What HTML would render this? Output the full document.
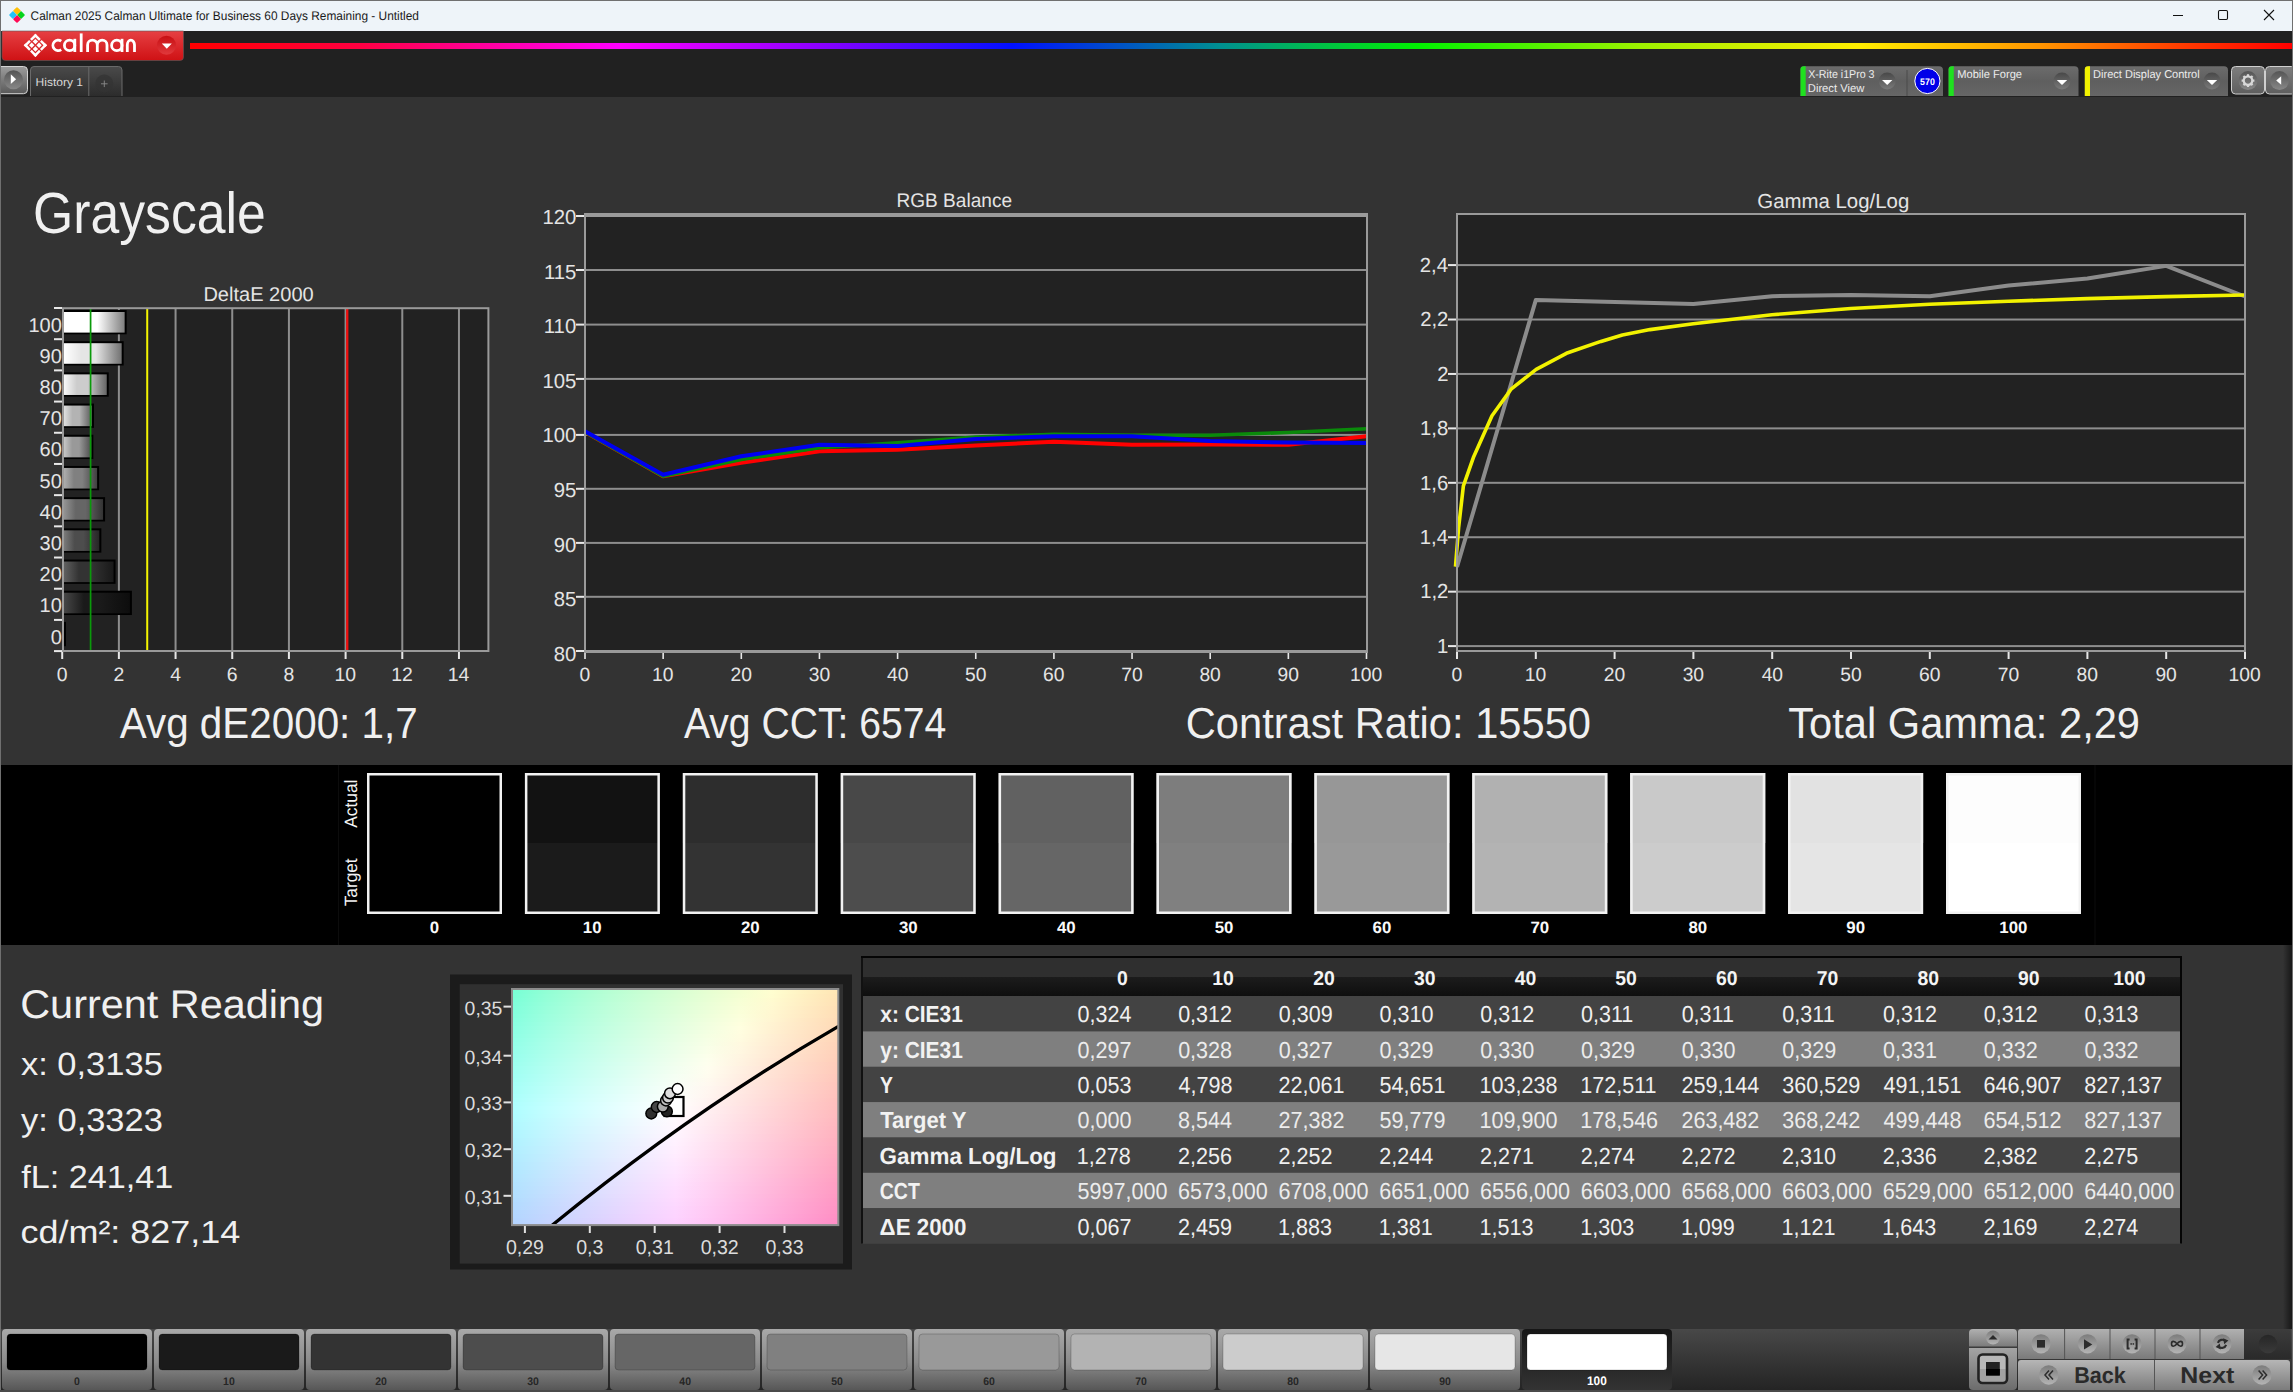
<!DOCTYPE html><html><head><meta charset="utf-8"><title>Calman Grayscale</title><style>html,body{margin:0;padding:0;width:2293px;height:1392px;overflow:hidden;background:#333;}svg{display:block;font-family:"Liberation Sans",sans-serif;}</style></head><body><svg width="2293" height="1392" viewBox="0 0 2293 1392" font-family="Liberation Sans, sans-serif" text-rendering="geometricPrecision"><defs>
<linearGradient id="gRed" x1="0" y1="0" x2="0" y2="1"><stop offset="0" stop-color="#e64043"/><stop offset="1" stop-color="#cf1114"/></linearGradient>
<linearGradient id="gRedDrop" x1="0" y1="0" x2="0" y2="1"><stop offset="0" stop-color="#c80e12"/><stop offset="1" stop-color="#e0393c"/></linearGradient>
<linearGradient id="gRainbow" x1="0" y1="0" x2="1" y2="0">
<stop offset="0" stop-color="#ff0000"/><stop offset="0.08" stop-color="#ff0040"/><stop offset="0.204" stop-color="#ff00ff"/>
<stop offset="0.30" stop-color="#8a00ff"/><stop offset="0.391" stop-color="#0010ff"/><stop offset="0.49" stop-color="#009090"/>
<stop offset="0.584" stop-color="#00f000"/><stop offset="0.69" stop-color="#9ef000"/><stop offset="0.793" stop-color="#ffee00"/>
<stop offset="0.88" stop-color="#ff9500"/><stop offset="0.95" stop-color="#ff3800"/><stop offset="1" stop-color="#ff0000"/></linearGradient>
<linearGradient id="gBtn" x1="0" y1="0" x2="0" y2="1"><stop offset="0" stop-color="#9c9c9c"/><stop offset="1" stop-color="#5a5a5a"/></linearGradient>
<linearGradient id="gBtn2" x1="0" y1="0" x2="0" y2="1"><stop offset="0" stop-color="#7e7e7e"/><stop offset="1" stop-color="#5e5e5e"/></linearGradient>
<linearGradient id="gCirc" x1="0" y1="0" x2="0" y2="1"><stop offset="0" stop-color="#555"/><stop offset="1" stop-color="#888"/></linearGradient>
<linearGradient id="gTab" x1="0" y1="0" x2="0" y2="1"><stop offset="0" stop-color="#4a4a4a"/><stop offset="1" stop-color="#2c2c2c"/></linearGradient>
<linearGradient id="gPanel" x1="0" y1="0" x2="0" y2="1"><stop offset="0" stop-color="#6c6c6c"/><stop offset="0.5" stop-color="#5f5f5f"/><stop offset="1" stop-color="#666"/></linearGradient>
<linearGradient id="gDrop" x1="0" y1="0" x2="0" y2="1"><stop offset="0" stop-color="#484848"/><stop offset="1" stop-color="#7a7a7a"/></linearGradient>
<linearGradient id="bar100" x1="0" y1="0" x2="1" y2="0"><stop offset="0" stop-color="rgb(255,255,255)"/><stop offset="0.3" stop-color="rgb(255,255,255)"/><stop offset="0.55" stop-color="rgb(255,255,255)"/><stop offset="1" stop-color="rgb(127,127,127)"/></linearGradient>
<linearGradient id="bar90" x1="0" y1="0" x2="1" y2="0"><stop offset="0" stop-color="rgb(255,255,255)"/><stop offset="0.3" stop-color="rgb(229,229,229)"/><stop offset="0.55" stop-color="rgb(229,229,229)"/><stop offset="1" stop-color="rgb(114,114,114)"/></linearGradient>
<linearGradient id="bar80" x1="0" y1="0" x2="1" y2="0"><stop offset="0" stop-color="rgb(249,249,249)"/><stop offset="0.3" stop-color="rgb(204,204,204)"/><stop offset="0.55" stop-color="rgb(204,204,204)"/><stop offset="1" stop-color="rgb(102,102,102)"/></linearGradient>
<linearGradient id="bar70" x1="0" y1="0" x2="1" y2="0"><stop offset="0" stop-color="rgb(224,224,224)"/><stop offset="0.3" stop-color="rgb(179,179,179)"/><stop offset="0.55" stop-color="rgb(179,179,179)"/><stop offset="1" stop-color="rgb(89,89,89)"/></linearGradient>
<linearGradient id="bar60" x1="0" y1="0" x2="1" y2="0"><stop offset="0" stop-color="rgb(198,198,198)"/><stop offset="0.3" stop-color="rgb(153,153,153)"/><stop offset="0.55" stop-color="rgb(153,153,153)"/><stop offset="1" stop-color="rgb(76,76,76)"/></linearGradient>
<linearGradient id="bar50" x1="0" y1="0" x2="1" y2="0"><stop offset="0" stop-color="rgb(173,173,173)"/><stop offset="0.3" stop-color="rgb(128,128,128)"/><stop offset="0.55" stop-color="rgb(128,128,128)"/><stop offset="1" stop-color="rgb(64,64,64)"/></linearGradient>
<linearGradient id="bar40" x1="0" y1="0" x2="1" y2="0"><stop offset="0" stop-color="rgb(147,147,147)"/><stop offset="0.3" stop-color="rgb(102,102,102)"/><stop offset="0.55" stop-color="rgb(102,102,102)"/><stop offset="1" stop-color="rgb(51,51,51)"/></linearGradient>
<linearGradient id="bar30" x1="0" y1="0" x2="1" y2="0"><stop offset="0" stop-color="rgb(122,122,122)"/><stop offset="0.3" stop-color="rgb(77,77,77)"/><stop offset="0.55" stop-color="rgb(77,77,77)"/><stop offset="1" stop-color="rgb(38,38,38)"/></linearGradient>
<linearGradient id="bar20" x1="0" y1="0" x2="1" y2="0"><stop offset="0" stop-color="rgb(96,96,96)"/><stop offset="0.3" stop-color="rgb(51,51,51)"/><stop offset="0.55" stop-color="rgb(51,51,51)"/><stop offset="1" stop-color="rgb(25,25,25)"/></linearGradient>
<linearGradient id="bar10" x1="0" y1="0" x2="1" y2="0"><stop offset="0" stop-color="rgb(71,71,71)"/><stop offset="0.3" stop-color="rgb(26,26,26)"/><stop offset="0.55" stop-color="rgb(26,26,26)"/><stop offset="1" stop-color="rgb(13,13,13)"/></linearGradient>
<linearGradient id="bar0" x1="0" y1="0" x2="1" y2="0"><stop offset="0" stop-color="rgb(45,45,45)"/><stop offset="0.3" stop-color="rgb(0,0,0)"/><stop offset="0.55" stop-color="rgb(0,0,0)"/><stop offset="1" stop-color="rgb(0,0,0)"/></linearGradient>
<linearGradient id="gHdr" x1="0" y1="0" x2="0" y2="1"><stop offset="0" stop-color="#1c1c1c"/><stop offset="1" stop-color="#0e0e0e"/></linearGradient>
<linearGradient id="gBar" x1="0" y1="0" x2="0" y2="1"><stop offset="0" stop-color="#484848"/><stop offset="1" stop-color="#242424"/></linearGradient>
<linearGradient id="gBBtn" x1="0" y1="0" x2="0" y2="1"><stop offset="0" stop-color="#a9a9a9"/><stop offset="0.55" stop-color="#8a8a8a"/><stop offset="1" stop-color="#575757"/></linearGradient>
<linearGradient id="gBSel" x1="0" y1="0" x2="0" y2="1"><stop offset="0" stop-color="#161616"/><stop offset="1" stop-color="#333"/></linearGradient>
<linearGradient id="gCtl" x1="0" y1="0" x2="0" y2="1"><stop offset="0" stop-color="#b0b0b0"/><stop offset="1" stop-color="#7a7a7a"/></linearGradient>
<linearGradient id="gCtl2" x1="0" y1="0" x2="0" y2="1"><stop offset="0" stop-color="#a4a4a4"/><stop offset="1" stop-color="#6c6c6c"/></linearGradient>
<linearGradient id="gCtl3" x1="0" y1="0" x2="0" y2="1"><stop offset="0" stop-color="#b6b6b6"/><stop offset="1" stop-color="#7c7c7c"/></linearGradient>
<linearGradient id="gCtlC" x1="0" y1="0" x2="0" y2="1"><stop offset="0" stop-color="#7c7c7c"/><stop offset="1" stop-color="#b4b4b4"/></linearGradient>
<linearGradient id="gDarkC" x1="0" y1="0" x2="0" y2="1"><stop offset="0" stop-color="#262626"/><stop offset="1" stop-color="#3a3a3a"/></linearGradient>
<linearGradient id="gShadeR" x1="0" y1="0" x2="1" y2="0"><stop offset="0" stop-color="#000" stop-opacity="0"/><stop offset="1" stop-color="#000" stop-opacity="0.55"/></linearGradient>
<linearGradient id="gDark" x1="0" y1="0" x2="0" y2="1"><stop offset="0" stop-color="#3c3c3c"/><stop offset="1" stop-color="#2a2a2a"/></linearGradient>
<linearGradient id="cie0"><stop offset="0.006" stop-color="#7affd6"/><stop offset="0.105" stop-color="#92ffd5"/><stop offset="0.204" stop-color="#a6ffd5"/><stop offset="0.302" stop-color="#b8ffd4"/><stop offset="0.401" stop-color="#c8ffd3"/><stop offset="0.500" stop-color="#d7ffd3"/><stop offset="0.599" stop-color="#e6ffd2"/><stop offset="0.698" stop-color="#f3ffd1"/><stop offset="0.796" stop-color="#fffed0"/><stop offset="0.895" stop-color="#fff2c2"/><stop offset="0.994" stop-color="#ffe6b5"/><stop offset="1" stop-color="#ffe6b5"/></linearGradient>
<linearGradient id="cie1"><stop offset="0.006" stop-color="#7cffd7"/><stop offset="0.105" stop-color="#94ffd7"/><stop offset="0.204" stop-color="#a8ffd6"/><stop offset="0.302" stop-color="#baffd6"/><stop offset="0.401" stop-color="#caffd5"/><stop offset="0.500" stop-color="#d9ffd4"/><stop offset="0.599" stop-color="#e7ffd4"/><stop offset="0.698" stop-color="#f4ffd3"/><stop offset="0.796" stop-color="#fffdd0"/><stop offset="0.895" stop-color="#fff0c2"/><stop offset="0.994" stop-color="#ffe4b5"/><stop offset="1" stop-color="#ffe4b5"/></linearGradient>
<linearGradient id="cie2"><stop offset="0.006" stop-color="#7effd9"/><stop offset="0.105" stop-color="#95ffd8"/><stop offset="0.204" stop-color="#a9ffd8"/><stop offset="0.302" stop-color="#bbffd7"/><stop offset="0.401" stop-color="#cbffd6"/><stop offset="0.500" stop-color="#daffd6"/><stop offset="0.599" stop-color="#e8ffd5"/><stop offset="0.698" stop-color="#f6ffd5"/><stop offset="0.796" stop-color="#fffbd0"/><stop offset="0.895" stop-color="#ffefc3"/><stop offset="0.994" stop-color="#ffe3b5"/><stop offset="1" stop-color="#ffe3b5"/></linearGradient>
<linearGradient id="cie3"><stop offset="0.006" stop-color="#80ffda"/><stop offset="0.105" stop-color="#97ffda"/><stop offset="0.204" stop-color="#abffd9"/><stop offset="0.302" stop-color="#bdffd9"/><stop offset="0.401" stop-color="#cdffd8"/><stop offset="0.500" stop-color="#dcffd7"/><stop offset="0.599" stop-color="#eaffd7"/><stop offset="0.698" stop-color="#f7ffd6"/><stop offset="0.796" stop-color="#fffad1"/><stop offset="0.895" stop-color="#ffeec3"/><stop offset="0.994" stop-color="#ffe2b6"/><stop offset="1" stop-color="#ffe2b6"/></linearGradient>
<linearGradient id="cie4"><stop offset="0.006" stop-color="#82ffdc"/><stop offset="0.105" stop-color="#99ffdb"/><stop offset="0.204" stop-color="#adffdb"/><stop offset="0.302" stop-color="#beffda"/><stop offset="0.401" stop-color="#ceffd9"/><stop offset="0.500" stop-color="#ddffd9"/><stop offset="0.599" stop-color="#ebffd8"/><stop offset="0.698" stop-color="#f8ffd8"/><stop offset="0.796" stop-color="#fff9d1"/><stop offset="0.895" stop-color="#ffecc3"/><stop offset="0.994" stop-color="#ffe0b6"/><stop offset="1" stop-color="#ffe0b6"/></linearGradient>
<linearGradient id="cie5"><stop offset="0.006" stop-color="#84ffdd"/><stop offset="0.105" stop-color="#9bffdc"/><stop offset="0.204" stop-color="#aeffdc"/><stop offset="0.302" stop-color="#c0ffdb"/><stop offset="0.401" stop-color="#d0ffdb"/><stop offset="0.500" stop-color="#deffda"/><stop offset="0.599" stop-color="#ecffda"/><stop offset="0.698" stop-color="#faffd9"/><stop offset="0.796" stop-color="#fff7d1"/><stop offset="0.895" stop-color="#ffebc4"/><stop offset="0.994" stop-color="#ffdfb6"/><stop offset="1" stop-color="#ffdfb6"/></linearGradient>
<linearGradient id="cie6"><stop offset="0.006" stop-color="#86ffde"/><stop offset="0.105" stop-color="#9dffde"/><stop offset="0.204" stop-color="#b0ffdd"/><stop offset="0.302" stop-color="#c1ffdd"/><stop offset="0.401" stop-color="#d1ffdc"/><stop offset="0.500" stop-color="#e0ffdc"/><stop offset="0.599" stop-color="#eeffdb"/><stop offset="0.698" stop-color="#fbffdb"/><stop offset="0.796" stop-color="#fff6d1"/><stop offset="0.895" stop-color="#ffeac4"/><stop offset="0.994" stop-color="#ffdeb7"/><stop offset="1" stop-color="#ffdeb7"/></linearGradient>
<linearGradient id="cie7"><stop offset="0.006" stop-color="#88ffe0"/><stop offset="0.105" stop-color="#9effdf"/><stop offset="0.204" stop-color="#b1ffdf"/><stop offset="0.302" stop-color="#c3ffde"/><stop offset="0.401" stop-color="#d2ffde"/><stop offset="0.500" stop-color="#e1ffde"/><stop offset="0.599" stop-color="#efffdd"/><stop offset="0.698" stop-color="#fcffdd"/><stop offset="0.796" stop-color="#fff5d2"/><stop offset="0.895" stop-color="#ffe8c4"/><stop offset="0.994" stop-color="#ffdcb7"/><stop offset="1" stop-color="#ffdcb7"/></linearGradient>
<linearGradient id="cie8"><stop offset="0.006" stop-color="#8affe1"/><stop offset="0.105" stop-color="#a0ffe1"/><stop offset="0.204" stop-color="#b3ffe0"/><stop offset="0.302" stop-color="#c4ffe0"/><stop offset="0.401" stop-color="#d4ffe0"/><stop offset="0.500" stop-color="#e3ffdf"/><stop offset="0.599" stop-color="#f1ffdf"/><stop offset="0.698" stop-color="#feffde"/><stop offset="0.796" stop-color="#fff3d2"/><stop offset="0.895" stop-color="#ffe7c5"/><stop offset="0.994" stop-color="#ffdbb7"/><stop offset="1" stop-color="#ffdbb7"/></linearGradient>
<linearGradient id="cie9"><stop offset="0.006" stop-color="#8cffe3"/><stop offset="0.105" stop-color="#a2ffe2"/><stop offset="0.204" stop-color="#b5ffe2"/><stop offset="0.302" stop-color="#c6ffe1"/><stop offset="0.401" stop-color="#d5ffe1"/><stop offset="0.500" stop-color="#e4ffe1"/><stop offset="0.599" stop-color="#f2ffe0"/><stop offset="0.698" stop-color="#ffffe0"/><stop offset="0.796" stop-color="#fff2d2"/><stop offset="0.895" stop-color="#ffe6c5"/><stop offset="0.994" stop-color="#ffdab8"/><stop offset="1" stop-color="#ffdab8"/></linearGradient>
<linearGradient id="cie10"><stop offset="0.006" stop-color="#8effe4"/><stop offset="0.105" stop-color="#a3ffe4"/><stop offset="0.204" stop-color="#b6ffe3"/><stop offset="0.302" stop-color="#c7ffe3"/><stop offset="0.401" stop-color="#d7ffe3"/><stop offset="0.500" stop-color="#e5ffe2"/><stop offset="0.599" stop-color="#f3ffe2"/><stop offset="0.698" stop-color="#fffde0"/><stop offset="0.796" stop-color="#fff1d2"/><stop offset="0.895" stop-color="#ffe4c5"/><stop offset="0.994" stop-color="#ffd8b8"/><stop offset="1" stop-color="#ffd8b8"/></linearGradient>
<linearGradient id="cie11"><stop offset="0.006" stop-color="#90ffe5"/><stop offset="0.105" stop-color="#a5ffe5"/><stop offset="0.204" stop-color="#b8ffe5"/><stop offset="0.302" stop-color="#c9ffe4"/><stop offset="0.401" stop-color="#d8ffe4"/><stop offset="0.500" stop-color="#e7ffe4"/><stop offset="0.599" stop-color="#f5ffe3"/><stop offset="0.698" stop-color="#fffce0"/><stop offset="0.796" stop-color="#ffefd3"/><stop offset="0.895" stop-color="#ffe3c5"/><stop offset="0.994" stop-color="#ffd7b8"/><stop offset="1" stop-color="#ffd7b8"/></linearGradient>
<linearGradient id="cie12"><stop offset="0.006" stop-color="#92ffe7"/><stop offset="0.105" stop-color="#a7ffe7"/><stop offset="0.204" stop-color="#b9ffe6"/><stop offset="0.302" stop-color="#caffe6"/><stop offset="0.401" stop-color="#daffe6"/><stop offset="0.500" stop-color="#e8ffe5"/><stop offset="0.599" stop-color="#f6ffe5"/><stop offset="0.698" stop-color="#fffbe0"/><stop offset="0.796" stop-color="#ffeed3"/><stop offset="0.895" stop-color="#ffe2c6"/><stop offset="0.994" stop-color="#ffd6b9"/><stop offset="1" stop-color="#ffd6b9"/></linearGradient>
<linearGradient id="cie13"><stop offset="0.006" stop-color="#94ffe8"/><stop offset="0.105" stop-color="#a9ffe8"/><stop offset="0.204" stop-color="#bbffe8"/><stop offset="0.302" stop-color="#ccffe7"/><stop offset="0.401" stop-color="#dbffe7"/><stop offset="0.500" stop-color="#eaffe7"/><stop offset="0.599" stop-color="#f7ffe6"/><stop offset="0.698" stop-color="#fff9e0"/><stop offset="0.796" stop-color="#ffedd3"/><stop offset="0.895" stop-color="#ffe0c6"/><stop offset="0.994" stop-color="#ffd4b9"/><stop offset="1" stop-color="#ffd4b9"/></linearGradient>
<linearGradient id="cie14"><stop offset="0.006" stop-color="#96ffea"/><stop offset="0.105" stop-color="#aaffe9"/><stop offset="0.204" stop-color="#bcffe9"/><stop offset="0.302" stop-color="#cdffe9"/><stop offset="0.401" stop-color="#dcffe9"/><stop offset="0.500" stop-color="#ebffe8"/><stop offset="0.599" stop-color="#f9ffe8"/><stop offset="0.698" stop-color="#fff8e1"/><stop offset="0.796" stop-color="#ffebd3"/><stop offset="0.895" stop-color="#ffdfc6"/><stop offset="0.994" stop-color="#ffd3b9"/><stop offset="1" stop-color="#ffd3b9"/></linearGradient>
<linearGradient id="cie15"><stop offset="0.006" stop-color="#98ffeb"/><stop offset="0.105" stop-color="#acffeb"/><stop offset="0.204" stop-color="#beffeb"/><stop offset="0.302" stop-color="#cfffea"/><stop offset="0.401" stop-color="#deffea"/><stop offset="0.500" stop-color="#ecffea"/><stop offset="0.599" stop-color="#faffe9"/><stop offset="0.698" stop-color="#fff7e1"/><stop offset="0.796" stop-color="#ffead4"/><stop offset="0.895" stop-color="#ffdec7"/><stop offset="0.994" stop-color="#ffd1ba"/><stop offset="1" stop-color="#ffd1ba"/></linearGradient>
<linearGradient id="cie16"><stop offset="0.006" stop-color="#99ffed"/><stop offset="0.105" stop-color="#aeffec"/><stop offset="0.204" stop-color="#c0ffec"/><stop offset="0.302" stop-color="#d0ffec"/><stop offset="0.401" stop-color="#dfffec"/><stop offset="0.500" stop-color="#eeffeb"/><stop offset="0.599" stop-color="#fcffeb"/><stop offset="0.698" stop-color="#fff5e1"/><stop offset="0.796" stop-color="#ffe9d4"/><stop offset="0.895" stop-color="#ffdcc7"/><stop offset="0.994" stop-color="#ffd0ba"/><stop offset="1" stop-color="#ffd0ba"/></linearGradient>
<linearGradient id="cie17"><stop offset="0.006" stop-color="#9bffee"/><stop offset="0.105" stop-color="#afffee"/><stop offset="0.204" stop-color="#c1ffee"/><stop offset="0.302" stop-color="#d2ffed"/><stop offset="0.401" stop-color="#e1ffed"/><stop offset="0.500" stop-color="#efffed"/><stop offset="0.599" stop-color="#fdffed"/><stop offset="0.698" stop-color="#fff4e1"/><stop offset="0.796" stop-color="#ffe7d4"/><stop offset="0.895" stop-color="#ffdbc7"/><stop offset="0.994" stop-color="#ffcfba"/><stop offset="1" stop-color="#ffcfba"/></linearGradient>
<linearGradient id="cie18"><stop offset="0.006" stop-color="#9dffef"/><stop offset="0.105" stop-color="#b1ffef"/><stop offset="0.204" stop-color="#c3ffef"/><stop offset="0.302" stop-color="#d3ffef"/><stop offset="0.401" stop-color="#e2ffef"/><stop offset="0.500" stop-color="#f1ffee"/><stop offset="0.599" stop-color="#feffee"/><stop offset="0.698" stop-color="#fff3e1"/><stop offset="0.796" stop-color="#ffe6d4"/><stop offset="0.895" stop-color="#ffd9c7"/><stop offset="0.994" stop-color="#ffcdbb"/><stop offset="1" stop-color="#ffcdbb"/></linearGradient>
<linearGradient id="cie19"><stop offset="0.006" stop-color="#9ffff1"/><stop offset="0.105" stop-color="#b3fff1"/><stop offset="0.204" stop-color="#c4fff0"/><stop offset="0.302" stop-color="#d5fff0"/><stop offset="0.401" stop-color="#e4fff0"/><stop offset="0.500" stop-color="#f2fff0"/><stop offset="0.599" stop-color="#fffeef"/><stop offset="0.698" stop-color="#fff1e2"/><stop offset="0.796" stop-color="#ffe4d5"/><stop offset="0.895" stop-color="#ffd8c8"/><stop offset="0.994" stop-color="#ffccbb"/><stop offset="1" stop-color="#ffccbb"/></linearGradient>
<linearGradient id="cie20"><stop offset="0.006" stop-color="#a1fff2"/><stop offset="0.105" stop-color="#b4fff2"/><stop offset="0.204" stop-color="#c6fff2"/><stop offset="0.302" stop-color="#d6fff2"/><stop offset="0.401" stop-color="#e5fff2"/><stop offset="0.500" stop-color="#f3fff1"/><stop offset="0.599" stop-color="#fffdef"/><stop offset="0.698" stop-color="#fff0e2"/><stop offset="0.796" stop-color="#ffe3d5"/><stop offset="0.895" stop-color="#ffd7c8"/><stop offset="0.994" stop-color="#ffcbbb"/><stop offset="1" stop-color="#ffcbbb"/></linearGradient>
<linearGradient id="cie21"><stop offset="0.006" stop-color="#a2fff4"/><stop offset="0.105" stop-color="#b6fff4"/><stop offset="0.204" stop-color="#c7fff3"/><stop offset="0.302" stop-color="#d7fff3"/><stop offset="0.401" stop-color="#e7fff3"/><stop offset="0.500" stop-color="#f5fff3"/><stop offset="0.599" stop-color="#fffcef"/><stop offset="0.698" stop-color="#ffeee2"/><stop offset="0.796" stop-color="#ffe2d5"/><stop offset="0.895" stop-color="#ffd5c8"/><stop offset="0.994" stop-color="#ffc9bc"/><stop offset="1" stop-color="#ffc9bc"/></linearGradient>
<linearGradient id="cie22"><stop offset="0.006" stop-color="#a4fff5"/><stop offset="0.105" stop-color="#b7fff5"/><stop offset="0.204" stop-color="#c9fff5"/><stop offset="0.302" stop-color="#d9fff5"/><stop offset="0.401" stop-color="#e8fff5"/><stop offset="0.500" stop-color="#f6fff4"/><stop offset="0.599" stop-color="#fffaef"/><stop offset="0.698" stop-color="#ffede2"/><stop offset="0.796" stop-color="#ffe0d5"/><stop offset="0.895" stop-color="#ffd4c8"/><stop offset="0.994" stop-color="#ffc8bc"/><stop offset="1" stop-color="#ffc8bc"/></linearGradient>
<linearGradient id="cie23"><stop offset="0.006" stop-color="#a6fff7"/><stop offset="0.105" stop-color="#b9fff6"/><stop offset="0.204" stop-color="#cafff6"/><stop offset="0.302" stop-color="#dafff6"/><stop offset="0.401" stop-color="#e9fff6"/><stop offset="0.500" stop-color="#f8fff6"/><stop offset="0.599" stop-color="#fff9f0"/><stop offset="0.698" stop-color="#ffece2"/><stop offset="0.796" stop-color="#ffdfd5"/><stop offset="0.895" stop-color="#ffd2c9"/><stop offset="0.994" stop-color="#ffc6bc"/><stop offset="1" stop-color="#ffc6bc"/></linearGradient>
<linearGradient id="cie24"><stop offset="0.006" stop-color="#a8fff8"/><stop offset="0.105" stop-color="#bbfff8"/><stop offset="0.204" stop-color="#ccfff8"/><stop offset="0.302" stop-color="#dcfff8"/><stop offset="0.401" stop-color="#ebfff8"/><stop offset="0.500" stop-color="#f9fff8"/><stop offset="0.599" stop-color="#fff7f0"/><stop offset="0.698" stop-color="#ffeae3"/><stop offset="0.796" stop-color="#ffded6"/><stop offset="0.895" stop-color="#ffd1c9"/><stop offset="0.994" stop-color="#ffc5bd"/><stop offset="1" stop-color="#ffc5bd"/></linearGradient>
<linearGradient id="cie25"><stop offset="0.006" stop-color="#a9fff9"/><stop offset="0.105" stop-color="#bcfff9"/><stop offset="0.204" stop-color="#cefff9"/><stop offset="0.302" stop-color="#ddfff9"/><stop offset="0.401" stop-color="#ecfff9"/><stop offset="0.500" stop-color="#fbfff9"/><stop offset="0.599" stop-color="#fff6f0"/><stop offset="0.698" stop-color="#ffe9e3"/><stop offset="0.796" stop-color="#ffdcd6"/><stop offset="0.895" stop-color="#ffd0c9"/><stop offset="0.994" stop-color="#ffc3bd"/><stop offset="1" stop-color="#ffc3bd"/></linearGradient>
<linearGradient id="cie26"><stop offset="0.006" stop-color="#abfffb"/><stop offset="0.105" stop-color="#befffb"/><stop offset="0.204" stop-color="#cffffb"/><stop offset="0.302" stop-color="#dffffb"/><stop offset="0.401" stop-color="#eefffb"/><stop offset="0.500" stop-color="#fcfffb"/><stop offset="0.599" stop-color="#fff5f0"/><stop offset="0.698" stop-color="#ffe7e3"/><stop offset="0.796" stop-color="#ffdbd6"/><stop offset="0.895" stop-color="#ffceca"/><stop offset="0.994" stop-color="#ffc2bd"/><stop offset="1" stop-color="#ffc2bd"/></linearGradient>
<linearGradient id="cie27"><stop offset="0.006" stop-color="#adfffc"/><stop offset="0.105" stop-color="#c0fffc"/><stop offset="0.204" stop-color="#d1fffc"/><stop offset="0.302" stop-color="#e0fffc"/><stop offset="0.401" stop-color="#effffc"/><stop offset="0.500" stop-color="#fdfffc"/><stop offset="0.599" stop-color="#fff3f0"/><stop offset="0.698" stop-color="#ffe6e3"/><stop offset="0.796" stop-color="#ffd9d6"/><stop offset="0.895" stop-color="#ffcdca"/><stop offset="0.994" stop-color="#ffc0bd"/><stop offset="1" stop-color="#ffc0bd"/></linearGradient>
<linearGradient id="cie28"><stop offset="0.006" stop-color="#affffe"/><stop offset="0.105" stop-color="#c1fffe"/><stop offset="0.204" stop-color="#d2fffe"/><stop offset="0.302" stop-color="#e2fffe"/><stop offset="0.401" stop-color="#f1fffe"/><stop offset="0.500" stop-color="#fffffe"/><stop offset="0.599" stop-color="#fff2f0"/><stop offset="0.698" stop-color="#ffe5e3"/><stop offset="0.796" stop-color="#ffd8d7"/><stop offset="0.895" stop-color="#ffcbca"/><stop offset="0.994" stop-color="#ffbfbe"/><stop offset="1" stop-color="#ffbfbe"/></linearGradient>
<linearGradient id="cie29"><stop offset="0.006" stop-color="#b0ffff"/><stop offset="0.105" stop-color="#c3ffff"/><stop offset="0.204" stop-color="#d3ffff"/><stop offset="0.302" stop-color="#e3ffff"/><stop offset="0.401" stop-color="#f2ffff"/><stop offset="0.500" stop-color="#fffefe"/><stop offset="0.599" stop-color="#fff0f1"/><stop offset="0.698" stop-color="#ffe3e4"/><stop offset="0.796" stop-color="#ffd6d7"/><stop offset="0.895" stop-color="#ffcaca"/><stop offset="0.994" stop-color="#ffbebe"/><stop offset="1" stop-color="#ffbebe"/></linearGradient>
<linearGradient id="cie30"><stop offset="0.006" stop-color="#b0fdff"/><stop offset="0.105" stop-color="#c3fdff"/><stop offset="0.204" stop-color="#d3fdff"/><stop offset="0.302" stop-color="#e3fdff"/><stop offset="0.401" stop-color="#f2fdff"/><stop offset="0.500" stop-color="#fffcfe"/><stop offset="0.599" stop-color="#ffeff1"/><stop offset="0.698" stop-color="#ffe2e4"/><stop offset="0.796" stop-color="#ffd5d7"/><stop offset="0.895" stop-color="#ffc8cb"/><stop offset="0.994" stop-color="#ffbcbe"/><stop offset="1" stop-color="#ffbcbe"/></linearGradient>
<linearGradient id="cie31"><stop offset="0.006" stop-color="#b0fcff"/><stop offset="0.105" stop-color="#c3fcff"/><stop offset="0.204" stop-color="#d3fcff"/><stop offset="0.302" stop-color="#e3fcff"/><stop offset="0.401" stop-color="#f2fcff"/><stop offset="0.500" stop-color="#fffbfe"/><stop offset="0.599" stop-color="#ffedf1"/><stop offset="0.698" stop-color="#ffe0e4"/><stop offset="0.796" stop-color="#ffd4d7"/><stop offset="0.895" stop-color="#ffc7cb"/><stop offset="0.994" stop-color="#ffbbbf"/><stop offset="1" stop-color="#ffbbbf"/></linearGradient>
<linearGradient id="cie32"><stop offset="0.006" stop-color="#b1fbff"/><stop offset="0.105" stop-color="#c3faff"/><stop offset="0.204" stop-color="#d4faff"/><stop offset="0.302" stop-color="#e3faff"/><stop offset="0.401" stop-color="#f2faff"/><stop offset="0.500" stop-color="#fff9fe"/><stop offset="0.599" stop-color="#ffecf1"/><stop offset="0.698" stop-color="#ffdfe4"/><stop offset="0.796" stop-color="#ffd2d7"/><stop offset="0.895" stop-color="#ffc6cb"/><stop offset="0.994" stop-color="#ffb9bf"/><stop offset="1" stop-color="#ffb9bf"/></linearGradient>
<linearGradient id="cie33"><stop offset="0.006" stop-color="#b1f9ff"/><stop offset="0.105" stop-color="#c3f9ff"/><stop offset="0.204" stop-color="#d4f9ff"/><stop offset="0.302" stop-color="#e3f9ff"/><stop offset="0.401" stop-color="#f2f9ff"/><stop offset="0.500" stop-color="#fff8fe"/><stop offset="0.599" stop-color="#ffebf1"/><stop offset="0.698" stop-color="#ffdde4"/><stop offset="0.796" stop-color="#ffd1d8"/><stop offset="0.895" stop-color="#ffc4cb"/><stop offset="0.994" stop-color="#ffb8bf"/><stop offset="1" stop-color="#ffb8bf"/></linearGradient>
<linearGradient id="cie34"><stop offset="0.006" stop-color="#b1f8ff"/><stop offset="0.105" stop-color="#c3f8ff"/><stop offset="0.204" stop-color="#d4f7ff"/><stop offset="0.302" stop-color="#e3f7ff"/><stop offset="0.401" stop-color="#f2f7ff"/><stop offset="0.500" stop-color="#fff7ff"/><stop offset="0.599" stop-color="#ffe9f1"/><stop offset="0.698" stop-color="#ffdce4"/><stop offset="0.796" stop-color="#ffcfd8"/><stop offset="0.895" stop-color="#ffc3cc"/><stop offset="0.994" stop-color="#ffb6bf"/><stop offset="1" stop-color="#ffb6bf"/></linearGradient>
<linearGradient id="cie35"><stop offset="0.006" stop-color="#b1f6ff"/><stop offset="0.105" stop-color="#c3f6ff"/><stop offset="0.204" stop-color="#d4f6ff"/><stop offset="0.302" stop-color="#e3f6ff"/><stop offset="0.401" stop-color="#f1f6ff"/><stop offset="0.500" stop-color="#fff5ff"/><stop offset="0.599" stop-color="#ffe8f1"/><stop offset="0.698" stop-color="#ffdbe5"/><stop offset="0.796" stop-color="#ffced8"/><stop offset="0.895" stop-color="#ffc1cc"/><stop offset="0.994" stop-color="#ffb4c0"/><stop offset="1" stop-color="#ffb4c0"/></linearGradient>
<linearGradient id="cie36"><stop offset="0.006" stop-color="#b1f5ff"/><stop offset="0.105" stop-color="#c3f5ff"/><stop offset="0.204" stop-color="#d4f4ff"/><stop offset="0.302" stop-color="#e3f4ff"/><stop offset="0.401" stop-color="#f1f4ff"/><stop offset="0.500" stop-color="#fff4ff"/><stop offset="0.599" stop-color="#ffe6f2"/><stop offset="0.698" stop-color="#ffd9e5"/><stop offset="0.796" stop-color="#ffccd8"/><stop offset="0.895" stop-color="#ffc0cc"/><stop offset="0.994" stop-color="#ffb3c0"/><stop offset="1" stop-color="#ffb3c0"/></linearGradient>
<linearGradient id="cie37"><stop offset="0.006" stop-color="#b1f3ff"/><stop offset="0.105" stop-color="#c3f3ff"/><stop offset="0.204" stop-color="#d4f3ff"/><stop offset="0.302" stop-color="#e3f3ff"/><stop offset="0.401" stop-color="#f1f2ff"/><stop offset="0.500" stop-color="#fff2ff"/><stop offset="0.599" stop-color="#ffe5f2"/><stop offset="0.698" stop-color="#ffd8e5"/><stop offset="0.796" stop-color="#ffcbd9"/><stop offset="0.895" stop-color="#ffbecc"/><stop offset="0.994" stop-color="#ffb1c0"/><stop offset="1" stop-color="#ffb1c0"/></linearGradient>
<linearGradient id="cie38"><stop offset="0.006" stop-color="#b1f2ff"/><stop offset="0.105" stop-color="#c3f2ff"/><stop offset="0.204" stop-color="#d4f1ff"/><stop offset="0.302" stop-color="#e3f1ff"/><stop offset="0.401" stop-color="#f1f1ff"/><stop offset="0.500" stop-color="#fff1ff"/><stop offset="0.599" stop-color="#ffe3f2"/><stop offset="0.698" stop-color="#ffd6e5"/><stop offset="0.796" stop-color="#ffc9d9"/><stop offset="0.895" stop-color="#ffbdcd"/><stop offset="0.994" stop-color="#ffb0c1"/><stop offset="1" stop-color="#ffb0c1"/></linearGradient>
<linearGradient id="cie39"><stop offset="0.006" stop-color="#b2f0ff"/><stop offset="0.105" stop-color="#c3f0ff"/><stop offset="0.204" stop-color="#d4f0ff"/><stop offset="0.302" stop-color="#e3f0ff"/><stop offset="0.401" stop-color="#f1efff"/><stop offset="0.500" stop-color="#ffefff"/><stop offset="0.599" stop-color="#ffe2f2"/><stop offset="0.698" stop-color="#ffd5e5"/><stop offset="0.796" stop-color="#ffc8d9"/><stop offset="0.895" stop-color="#ffbbcd"/><stop offset="0.994" stop-color="#ffaec1"/><stop offset="1" stop-color="#ffaec1"/></linearGradient>
<linearGradient id="cie40"><stop offset="0.006" stop-color="#b2efff"/><stop offset="0.105" stop-color="#c3efff"/><stop offset="0.204" stop-color="#d4eeff"/><stop offset="0.302" stop-color="#e3eeff"/><stop offset="0.401" stop-color="#f1eeff"/><stop offset="0.500" stop-color="#ffeeff"/><stop offset="0.599" stop-color="#ffe0f2"/><stop offset="0.698" stop-color="#ffd3e5"/><stop offset="0.796" stop-color="#ffc6d9"/><stop offset="0.895" stop-color="#ffb9cd"/><stop offset="0.994" stop-color="#ffadc1"/><stop offset="1" stop-color="#ffadc1"/></linearGradient>
<linearGradient id="cie41"><stop offset="0.006" stop-color="#b2edff"/><stop offset="0.105" stop-color="#c3edff"/><stop offset="0.204" stop-color="#d4edff"/><stop offset="0.302" stop-color="#e3edff"/><stop offset="0.401" stop-color="#f1ecff"/><stop offset="0.500" stop-color="#ffecff"/><stop offset="0.599" stop-color="#ffdff2"/><stop offset="0.698" stop-color="#ffd2e6"/><stop offset="0.796" stop-color="#ffc5d9"/><stop offset="0.895" stop-color="#ffb8cd"/><stop offset="0.994" stop-color="#ffabc1"/><stop offset="1" stop-color="#ffabc1"/></linearGradient>
<linearGradient id="cie42"><stop offset="0.006" stop-color="#b2ecff"/><stop offset="0.105" stop-color="#c4ecff"/><stop offset="0.204" stop-color="#d4ebff"/><stop offset="0.302" stop-color="#e3ebff"/><stop offset="0.401" stop-color="#f1ebff"/><stop offset="0.500" stop-color="#ffeaff"/><stop offset="0.599" stop-color="#ffddf2"/><stop offset="0.698" stop-color="#ffd0e6"/><stop offset="0.796" stop-color="#ffc3da"/><stop offset="0.895" stop-color="#ffb6ce"/><stop offset="0.994" stop-color="#ffa9c2"/><stop offset="1" stop-color="#ffa9c2"/></linearGradient>
<linearGradient id="cie43"><stop offset="0.006" stop-color="#b2eaff"/><stop offset="0.105" stop-color="#c4eaff"/><stop offset="0.204" stop-color="#d4eaff"/><stop offset="0.302" stop-color="#e3e9ff"/><stop offset="0.401" stop-color="#f1e9ff"/><stop offset="0.500" stop-color="#fee9ff"/><stop offset="0.599" stop-color="#ffdcf3"/><stop offset="0.698" stop-color="#ffcfe6"/><stop offset="0.796" stop-color="#ffc2da"/><stop offset="0.895" stop-color="#ffb5ce"/><stop offset="0.994" stop-color="#ffa8c2"/><stop offset="1" stop-color="#ffa8c2"/></linearGradient>
<linearGradient id="cie44"><stop offset="0.006" stop-color="#b2e9ff"/><stop offset="0.105" stop-color="#c4e9ff"/><stop offset="0.204" stop-color="#d4e8ff"/><stop offset="0.302" stop-color="#e3e8ff"/><stop offset="0.401" stop-color="#f1e8ff"/><stop offset="0.500" stop-color="#fee7ff"/><stop offset="0.599" stop-color="#ffdaf3"/><stop offset="0.698" stop-color="#ffcde6"/><stop offset="0.796" stop-color="#ffc0da"/><stop offset="0.895" stop-color="#ffb3ce"/><stop offset="0.994" stop-color="#ffa6c2"/><stop offset="1" stop-color="#ffa6c2"/></linearGradient>
<linearGradient id="cie45"><stop offset="0.006" stop-color="#b2e8ff"/><stop offset="0.105" stop-color="#c4e7ff"/><stop offset="0.204" stop-color="#d4e7ff"/><stop offset="0.302" stop-color="#e3e6ff"/><stop offset="0.401" stop-color="#f1e6ff"/><stop offset="0.500" stop-color="#fee6ff"/><stop offset="0.599" stop-color="#ffd9f3"/><stop offset="0.698" stop-color="#ffcce6"/><stop offset="0.796" stop-color="#ffbfda"/><stop offset="0.895" stop-color="#ffb2ce"/><stop offset="0.994" stop-color="#ffa5c2"/><stop offset="1" stop-color="#ffa5c2"/></linearGradient>
<linearGradient id="cie46"><stop offset="0.006" stop-color="#b3e6ff"/><stop offset="0.105" stop-color="#c4e6ff"/><stop offset="0.204" stop-color="#d4e5ff"/><stop offset="0.302" stop-color="#e3e5ff"/><stop offset="0.401" stop-color="#f1e4ff"/><stop offset="0.500" stop-color="#fee4ff"/><stop offset="0.599" stop-color="#ffd7f3"/><stop offset="0.698" stop-color="#ffcae7"/><stop offset="0.796" stop-color="#ffbdda"/><stop offset="0.895" stop-color="#ffb0ce"/><stop offset="0.994" stop-color="#ffa3c3"/><stop offset="1" stop-color="#ffa3c3"/></linearGradient>
<linearGradient id="cie47"><stop offset="0.006" stop-color="#b3e5ff"/><stop offset="0.105" stop-color="#c4e4ff"/><stop offset="0.204" stop-color="#d4e4ff"/><stop offset="0.302" stop-color="#e3e3ff"/><stop offset="0.401" stop-color="#f1e3ff"/><stop offset="0.500" stop-color="#fee2ff"/><stop offset="0.599" stop-color="#ffd6f3"/><stop offset="0.698" stop-color="#ffc9e7"/><stop offset="0.796" stop-color="#ffbbdb"/><stop offset="0.895" stop-color="#ffaecf"/><stop offset="0.994" stop-color="#ffa1c3"/><stop offset="1" stop-color="#ffa1c3"/></linearGradient>
<linearGradient id="cie48"><stop offset="0.006" stop-color="#b3e3ff"/><stop offset="0.105" stop-color="#c4e3ff"/><stop offset="0.204" stop-color="#d4e2ff"/><stop offset="0.302" stop-color="#e3e2ff"/><stop offset="0.401" stop-color="#f1e1ff"/><stop offset="0.500" stop-color="#fee1ff"/><stop offset="0.599" stop-color="#ffd4f3"/><stop offset="0.698" stop-color="#ffc7e7"/><stop offset="0.796" stop-color="#ffbadb"/><stop offset="0.895" stop-color="#ffadcf"/><stop offset="0.994" stop-color="#ff9fc3"/><stop offset="1" stop-color="#ff9fc3"/></linearGradient>
<linearGradient id="cie49"><stop offset="0.006" stop-color="#b3e2ff"/><stop offset="0.105" stop-color="#c4e1ff"/><stop offset="0.204" stop-color="#d4e1ff"/><stop offset="0.302" stop-color="#e3e0ff"/><stop offset="0.401" stop-color="#f1e0ff"/><stop offset="0.500" stop-color="#fedfff"/><stop offset="0.599" stop-color="#ffd3f3"/><stop offset="0.698" stop-color="#ffc5e7"/><stop offset="0.796" stop-color="#ffb8db"/><stop offset="0.895" stop-color="#ffabcf"/><stop offset="0.994" stop-color="#ff9ec4"/><stop offset="1" stop-color="#ff9ec4"/></linearGradient>
<linearGradient id="cie50"><stop offset="0.006" stop-color="#b3e0ff"/><stop offset="0.105" stop-color="#c4e0ff"/><stop offset="0.204" stop-color="#d4dfff"/><stop offset="0.302" stop-color="#e3dfff"/><stop offset="0.401" stop-color="#f0deff"/><stop offset="0.500" stop-color="#feddff"/><stop offset="0.599" stop-color="#ffd1f4"/><stop offset="0.698" stop-color="#ffc4e7"/><stop offset="0.796" stop-color="#ffb7db"/><stop offset="0.895" stop-color="#ffa9cf"/><stop offset="0.994" stop-color="#ff9cc4"/><stop offset="1" stop-color="#ff9cc4"/></linearGradient>
<linearGradient id="cie51"><stop offset="0.006" stop-color="#b3dfff"/><stop offset="0.105" stop-color="#c4deff"/><stop offset="0.204" stop-color="#d4ddff"/><stop offset="0.302" stop-color="#e3ddff"/><stop offset="0.401" stop-color="#f0dcff"/><stop offset="0.500" stop-color="#fedcff"/><stop offset="0.599" stop-color="#ffd0f4"/><stop offset="0.698" stop-color="#ffc2e7"/><stop offset="0.796" stop-color="#ffb5db"/><stop offset="0.895" stop-color="#ffa8d0"/><stop offset="0.994" stop-color="#ff9ac4"/><stop offset="1" stop-color="#ff9ac4"/></linearGradient>
<linearGradient id="cie52"><stop offset="0.006" stop-color="#b3ddff"/><stop offset="0.105" stop-color="#c4dcff"/><stop offset="0.204" stop-color="#d4dcff"/><stop offset="0.302" stop-color="#e2dbff"/><stop offset="0.401" stop-color="#f0dbff"/><stop offset="0.500" stop-color="#fedaff"/><stop offset="0.599" stop-color="#ffcef4"/><stop offset="0.698" stop-color="#ffc1e8"/><stop offset="0.796" stop-color="#ffb3dc"/><stop offset="0.895" stop-color="#ffa6d0"/><stop offset="0.994" stop-color="#ff98c4"/><stop offset="1" stop-color="#ff98c4"/></linearGradient>
<linearGradient id="cie53"><stop offset="0.006" stop-color="#b3dbff"/><stop offset="0.105" stop-color="#c4dbff"/><stop offset="0.204" stop-color="#d4daff"/><stop offset="0.302" stop-color="#e2daff"/><stop offset="0.401" stop-color="#f0d9ff"/><stop offset="0.500" stop-color="#fdd9ff"/><stop offset="0.599" stop-color="#ffcdf4"/><stop offset="0.698" stop-color="#ffbfe8"/><stop offset="0.796" stop-color="#ffb2dc"/><stop offset="0.895" stop-color="#ffa4d0"/><stop offset="0.994" stop-color="#ff97c5"/><stop offset="1" stop-color="#ff97c5"/></linearGradient>
<linearGradient id="cie54"><stop offset="0.006" stop-color="#b4daff"/><stop offset="0.105" stop-color="#c4d9ff"/><stop offset="0.204" stop-color="#d4d9ff"/><stop offset="0.302" stop-color="#e2d8ff"/><stop offset="0.401" stop-color="#f0d8ff"/><stop offset="0.500" stop-color="#fdd7ff"/><stop offset="0.599" stop-color="#ffcbf4"/><stop offset="0.698" stop-color="#ffbee8"/><stop offset="0.796" stop-color="#ffb0dc"/><stop offset="0.895" stop-color="#ffa3d0"/><stop offset="0.994" stop-color="#ff95c5"/><stop offset="1" stop-color="#ff95c5"/></linearGradient>
<linearGradient id="cie55"><stop offset="0.006" stop-color="#b4d8ff"/><stop offset="0.105" stop-color="#c4d8ff"/><stop offset="0.204" stop-color="#d4d7ff"/><stop offset="0.302" stop-color="#e2d7ff"/><stop offset="0.401" stop-color="#f0d6ff"/><stop offset="0.500" stop-color="#fdd5ff"/><stop offset="0.599" stop-color="#ffc9f4"/><stop offset="0.698" stop-color="#ffbce8"/><stop offset="0.796" stop-color="#ffafdc"/><stop offset="0.895" stop-color="#ffa1d1"/><stop offset="0.994" stop-color="#ff93c5"/><stop offset="1" stop-color="#ff93c5"/></linearGradient>
<linearGradient id="cie56"><stop offset="0.006" stop-color="#b4d7ff"/><stop offset="0.105" stop-color="#c4d6ff"/><stop offset="0.204" stop-color="#d4d6ff"/><stop offset="0.302" stop-color="#e2d5ff"/><stop offset="0.401" stop-color="#f0d4ff"/><stop offset="0.500" stop-color="#fdd4ff"/><stop offset="0.599" stop-color="#ffc8f4"/><stop offset="0.698" stop-color="#ffbae8"/><stop offset="0.796" stop-color="#ffaddc"/><stop offset="0.895" stop-color="#ff9fd1"/><stop offset="0.994" stop-color="#ff91c5"/><stop offset="1" stop-color="#ff91c5"/></linearGradient>
<linearGradient id="cie57"><stop offset="0.006" stop-color="#b4d5ff"/><stop offset="0.105" stop-color="#c5d5ff"/><stop offset="0.204" stop-color="#d4d4ff"/><stop offset="0.302" stop-color="#e2d3ff"/><stop offset="0.401" stop-color="#f0d3ff"/><stop offset="0.500" stop-color="#fdd2ff"/><stop offset="0.599" stop-color="#ffc6f4"/><stop offset="0.698" stop-color="#ffb9e8"/><stop offset="0.796" stop-color="#ffabdd"/><stop offset="0.895" stop-color="#ff9dd1"/><stop offset="0.994" stop-color="#ff8fc6"/><stop offset="1" stop-color="#ff8fc6"/></linearGradient>
<linearGradient id="cie58"><stop offset="0.006" stop-color="#b4d4ff"/><stop offset="0.105" stop-color="#c5d3ff"/><stop offset="0.204" stop-color="#d4d2ff"/><stop offset="0.302" stop-color="#e2d2ff"/><stop offset="0.401" stop-color="#f0d1ff"/><stop offset="0.500" stop-color="#fdd0ff"/><stop offset="0.599" stop-color="#ffc5f5"/><stop offset="0.698" stop-color="#ffb7e9"/><stop offset="0.796" stop-color="#ffa9dd"/><stop offset="0.895" stop-color="#ff9cd1"/><stop offset="0.994" stop-color="#ff8dc6"/><stop offset="1" stop-color="#ff8dc6"/></linearGradient></defs><rect x="0" y="0" width="2293" height="1392" fill="#333"/>
<rect x="0" y="0" width="2293" height="31" fill="#eef4f9"/>
<rect x="0" y="31" width="2293" height="66" fill="#212121"/>
<g transform="translate(17,15) rotate(45)"><rect x="-5.75" y="-5.75" width="5.75" height="5.75" rx="0.8" fill="#ffc107"/><rect x="0" y="-5.75" width="5.75" height="5.75" rx="0.8" fill="#06d41a"/><rect x="0" y="0" width="5.75" height="5.75" rx="0.8" fill="#ff0a55"/><rect x="-5.75" y="0" width="5.75" height="5.75" rx="0.8" fill="#22c4f8"/></g>
<text x="30.61" y="19.70" font-size="12.46" textLength="388.25" lengthAdjust="spacingAndGlyphs" fill="#1a1a1a">Calman 2025 Calman Ultimate for Business 60 Days Remaining  - Untitled</text>
<rect x="2173" y="15" width="10" height="1" fill="#111"/>
<rect x="2218.5" y="10.5" width="9" height="9" rx="1.2" fill="none" stroke="#111" stroke-width="1.1"/>
<path d="M2264,10 L2274,20 M2274,10 L2264,20" stroke="#111" stroke-width="1.1"/>
<path d="M2,31 H183.5 V57 Q183.5,60.5 180,60.5 H5.5 Q2,60.5 2,57 Z" fill="url(#gRed)" stroke="#5a5a5a" stroke-width="0.6"/>
<g transform="translate(35.4,45.3) rotate(45)" fill="#fff"><rect x="-8.25" y="-8.25" width="7.60" height="2.5"/><rect x="-8.25" y="-8.25" width="2.5" height="7.60"/><rect x="-4.5" y="-4.5" width="3.8" height="3.8"/><rect x="-8.25" y="5.75" width="7.60" height="2.5"/><rect x="-8.25" y="0.65" width="2.5" height="7.60"/><rect x="-4.5" y="0.7" width="3.8" height="3.8"/><rect x="0.65" y="-8.25" width="7.60" height="2.5"/><rect x="5.75" y="-8.25" width="2.5" height="7.60"/><rect x="0.7" y="-4.5" width="3.8" height="3.8"/><rect x="0.65" y="5.75" width="7.60" height="2.5"/><rect x="5.75" y="0.65" width="2.5" height="7.60"/><rect x="0.7" y="0.7" width="3.8" height="3.8"/></g>
<g fill="none" stroke="#fff" stroke-width="2.8"><path d="M61.2,41.2 A5.2,5.2 0 1 0 61.2,49.6"/><circle cx="69.6" cy="45.4" r="5.2"/><path d="M74.8,38.8 V52"/><path d="M81.2,33.4 V52"/><path d="M87.6,52 V44.9 A4.85,4.7 0 0 1 97.3,44.9 V52 M97.3,44.9 A4.85,4.7 0 0 1 107,44.9 V52"/><circle cx="116.8" cy="45.4" r="5.2"/><path d="M122,38.8 V52"/><path d="M127.3,52 V45 A3.6,4.8 0 0 1 134.5,45 V52"/></g>
<circle cx="166.5" cy="45.3" r="9.5" fill="url(#gRedDrop)"/>
<path d="M161.8,43.6 L171.8,43.6 L166.8,48.8 Z" fill="#fff"/>
<rect x="190" y="43" width="2103" height="6" fill="url(#gRainbow)"/>
<rect x="-6" y="66.5" width="33.5" height="27.2" rx="4" fill="url(#gBtn)" stroke="#d4d4d4" stroke-width="1"/>
<circle cx="13.5" cy="79.8" r="9.5" fill="url(#gCirc)"/>
<path d="M10.8,74.2 L16.1,79.3 L10.8,84.1 Z" fill="#fff"/>
<path d="M30.5,96 V70 Q30.5,66.5 34,66.5 H118.5 Q122,66.5 122,70 V96" fill="url(#gTab)" stroke="#6a6a6a" stroke-width="1"/>
<rect x="88.3" y="67" width="1" height="29" fill="#6a6a6a"/>
<circle cx="104.3" cy="83.5" r="9" fill="#333" opacity="0.7"/>
<path d="M101,83.8 H107.6 M104.3,80.5 V87.1" stroke="#8a8a8a" stroke-width="0.9"/>
<text x="35.54" y="85.90" font-size="11.45" textLength="47.41" lengthAdjust="spacingAndGlyphs" fill="#d8d8d8">History 1</text>
<path d="M1800.5,96 V69.5 Q1800.5,66.2 1803.8,66.2 H1939 Q1943,66.2 1943,70.2 V96 Z" fill="url(#gPanel)"/><path d="M1800.5,96 V69.5 Q1800.5,66.2 1803.8,66.2 H1805.7 V96 Z" fill="#1fe01f"/>
<text x="1808.23" y="78.00" font-size="11.45" textLength="66.29" lengthAdjust="spacingAndGlyphs" fill="#ececec">X-Rite i1Pro 3</text>
<text x="1807.80" y="91.90" font-size="11.45" textLength="56.48" lengthAdjust="spacingAndGlyphs" fill="#ececec">Direct View</text>
<circle cx="1887.2" cy="81" r="8.5" fill="url(#gDrop)"/><path d="M1882.0,80 L1892.4,80 L1887.2,85 Z" fill="#fff"/>
<rect x="1906.5" y="70" width="1" height="26" fill="#4a4a4a"/>
<circle cx="1927.4" cy="81" r="12.6" fill="#0000e8" stroke="#fff" stroke-width="1"/>
<text x="1920.12" y="84.60" font-size="9.57" textLength="14.68" lengthAdjust="spacingAndGlyphs" fill="#fff" font-weight="700">570</text>
<path d="M1948.6,96 V69.5 Q1948.6,66.2 1951.8999999999999,66.2 H2074.5 Q2078.5,66.2 2078.5,70.2 V96 Z" fill="url(#gPanel)"/><path d="M1948.6,96 V69.5 Q1948.6,66.2 1951.8999999999999,66.2 H1953.8 V96 Z" fill="#1fe01f"/>
<text x="1957.31" y="78.00" font-size="11.45" textLength="64.70" lengthAdjust="spacingAndGlyphs" fill="#ececec">Mobile Forge</text>
<circle cx="2062" cy="81" r="8.5" fill="url(#gDrop)"/><path d="M2056.8,80 L2067.2,80 L2062,85 Z" fill="#fff"/>
<path d="M2084.8,96 V69.5 Q2084.8,66.2 2088.1000000000004,66.2 H2224 Q2228,66.2 2228,70.2 V96 Z" fill="url(#gPanel)"/><path d="M2084.8,96 V69.5 Q2084.8,66.2 2088.1000000000004,66.2 H2090.0 V96 Z" fill="#f2f200"/>
<text x="2093.12" y="77.80" font-size="11.45" textLength="106.59" lengthAdjust="spacingAndGlyphs" fill="#ececec">Direct Display Control</text>
<circle cx="2212" cy="81" r="8.5" fill="url(#gDrop)"/><path d="M2206.8,80 L2217.2,80 L2212,85 Z" fill="#fff"/>
<rect x="2231.5" y="66.5" width="33" height="27.5" rx="4" fill="url(#gBtn2)" stroke="#cfcfcf" stroke-width="1"/>
<circle cx="2248" cy="80.6" r="9.5" fill="url(#gCirc)"/>
<g transform="translate(2248,80.6)" fill="#d8d8d8"><rect x="-1.1" y="-6.4" width="2.2" height="2.6" transform="rotate(0)"/><rect x="-1.1" y="-6.4" width="2.2" height="2.6" transform="rotate(45)"/><rect x="-1.1" y="-6.4" width="2.2" height="2.6" transform="rotate(90)"/><rect x="-1.1" y="-6.4" width="2.2" height="2.6" transform="rotate(135)"/><rect x="-1.1" y="-6.4" width="2.2" height="2.6" transform="rotate(180)"/><rect x="-1.1" y="-6.4" width="2.2" height="2.6" transform="rotate(225)"/><rect x="-1.1" y="-6.4" width="2.2" height="2.6" transform="rotate(270)"/><rect x="-1.1" y="-6.4" width="2.2" height="2.6" transform="rotate(315)"/><circle r="4.3" fill="none" stroke="#d8d8d8" stroke-width="2.2"/></g>
<rect x="2265.5" y="66.5" width="30" height="27.5" rx="4" fill="url(#gBtn2)" stroke="#cfcfcf" stroke-width="1"/>
<circle cx="2279.5" cy="80.6" r="9.5" fill="url(#gCirc)"/>
<path d="M2276.2,80.5 L2281.2,76.3 V84.8 Z" fill="#fff"/>
<text x="33.12" y="232.80" font-size="57.97" textLength="232.69" lengthAdjust="spacingAndGlyphs" fill="#f0f0f0">Grayscale</text>
<text x="203.40" y="300.80" font-size="19.86" textLength="110.29" lengthAdjust="spacingAndGlyphs" fill="#e4e4e4">DeltaE 2000</text>
<rect x="63" y="308.2" width="425.4" height="342.8" fill="#222"/>
<rect x="117.88" y="308.2" width="2" height="342.8" fill="#8e8e8e"/>
<rect x="174.56" y="308.2" width="2" height="342.8" fill="#8e8e8e"/>
<rect x="231.24" y="308.2" width="2" height="342.8" fill="#8e8e8e"/>
<rect x="287.92" y="308.2" width="2" height="342.8" fill="#8e8e8e"/>
<rect x="344.60" y="308.2" width="2" height="342.8" fill="#8e8e8e"/>
<rect x="401.28" y="308.2" width="2" height="342.8" fill="#8e8e8e"/>
<rect x="457.96" y="308.2" width="2" height="342.8" fill="#8e8e8e"/>
<rect x="54" y="307.00" width="8" height="2" fill="#e8e8e8"/>
<rect x="54" y="338.19" width="8" height="2" fill="#e8e8e8"/>
<rect x="54" y="369.38" width="8" height="2" fill="#e8e8e8"/>
<rect x="54" y="400.57" width="8" height="2" fill="#e8e8e8"/>
<rect x="54" y="431.76" width="8" height="2" fill="#e8e8e8"/>
<rect x="54" y="462.95" width="8" height="2" fill="#e8e8e8"/>
<rect x="54" y="494.15" width="8" height="2" fill="#e8e8e8"/>
<rect x="54" y="525.34" width="8" height="2" fill="#e8e8e8"/>
<rect x="54" y="556.53" width="8" height="2" fill="#e8e8e8"/>
<rect x="54" y="587.72" width="8" height="2" fill="#e8e8e8"/>
<rect x="54" y="618.91" width="8" height="2" fill="#e8e8e8"/>
<rect x="54" y="650.10" width="8" height="2" fill="#e8e8e8"/>
<text x="28.50" y="331.60" font-size="20.00" textLength="33.37" lengthAdjust="spacingAndGlyphs" fill="#e4e4e4">100</text>
<rect x="64" y="310.00" width="62.65" height="24.3" fill="#000"/>
<rect x="64" y="312.00" width="60.65" height="20.6" fill="url(#bar100)"/>
<text x="39.60" y="362.79" font-size="20.00" textLength="22.25" lengthAdjust="spacingAndGlyphs" fill="#e4e4e4">90</text>
<rect x="64" y="341.19" width="59.67" height="24.3" fill="#000"/>
<rect x="64" y="343.19" width="57.67" height="20.6" fill="url(#bar90)"/>
<text x="39.60" y="393.98" font-size="20.00" textLength="22.25" lengthAdjust="spacingAndGlyphs" fill="#e4e4e4">80</text>
<rect x="64" y="372.38" width="44.76" height="24.3" fill="#000"/>
<rect x="64" y="374.38" width="42.76" height="20.6" fill="url(#bar80)"/>
<text x="39.60" y="425.17" font-size="20.00" textLength="22.25" lengthAdjust="spacingAndGlyphs" fill="#e4e4e4">70</text>
<rect x="64" y="403.57" width="29.97" height="24.3" fill="#000"/>
<rect x="64" y="405.57" width="27.97" height="20.6" fill="url(#bar70)"/>
<text x="39.60" y="456.36" font-size="20.00" textLength="22.25" lengthAdjust="spacingAndGlyphs" fill="#e4e4e4">60</text>
<rect x="64" y="434.76" width="29.35" height="24.3" fill="#000"/>
<rect x="64" y="436.76" width="27.35" height="20.6" fill="url(#bar60)"/>
<text x="39.60" y="487.55" font-size="20.00" textLength="22.25" lengthAdjust="spacingAndGlyphs" fill="#e4e4e4">50</text>
<rect x="64" y="465.95" width="35.13" height="24.3" fill="#000"/>
<rect x="64" y="467.95" width="33.13" height="20.6" fill="url(#bar50)"/>
<text x="39.60" y="518.74" font-size="20.00" textLength="22.25" lengthAdjust="spacingAndGlyphs" fill="#e4e4e4">40</text>
<rect x="64" y="497.15" width="41.08" height="24.3" fill="#000"/>
<rect x="64" y="499.15" width="39.08" height="20.6" fill="url(#bar40)"/>
<text x="39.60" y="549.93" font-size="20.00" textLength="22.25" lengthAdjust="spacingAndGlyphs" fill="#e4e4e4">30</text>
<rect x="64" y="528.34" width="37.34" height="24.3" fill="#000"/>
<rect x="64" y="530.34" width="35.34" height="20.6" fill="url(#bar30)"/>
<text x="39.60" y="581.12" font-size="20.00" textLength="22.25" lengthAdjust="spacingAndGlyphs" fill="#e4e4e4">20</text>
<rect x="64" y="559.53" width="51.56" height="24.3" fill="#000"/>
<rect x="64" y="561.53" width="49.56" height="20.6" fill="url(#bar20)"/>
<text x="39.60" y="612.31" font-size="20.00" textLength="22.25" lengthAdjust="spacingAndGlyphs" fill="#e4e4e4">10</text>
<rect x="64" y="590.72" width="67.89" height="24.3" fill="#000"/>
<rect x="64" y="592.72" width="65.89" height="20.6" fill="url(#bar10)"/>
<text x="50.70" y="643.50" font-size="20.00" textLength="11.12" lengthAdjust="spacingAndGlyphs" fill="#e4e4e4">0</text>
<rect x="64" y="621.91" width="2.00" height="24.3" fill="#000"/>
<rect x="89.74" y="308.2" width="1.7" height="342.8" fill="#0a9a0a"/>
<rect x="146.22" y="308.2" width="2" height="342.8" fill="#f4f400"/>
<rect x="346.1" y="308.2" width="2.3" height="342.8" fill="#f01010"/>
<rect x="63" y="308.2" width="425.4" height="342.8" fill="none" stroke="#9a9a9a" stroke-width="2"/>
<rect x="61.20" y="652" width="2" height="7" fill="#e8e8e8"/>
<text x="56.76" y="680.70" font-size="19.42" textLength="10.80" lengthAdjust="spacingAndGlyphs" fill="#e4e4e4">0</text>
<rect x="117.88" y="652" width="2" height="7" fill="#e8e8e8"/>
<text x="113.49" y="680.70" font-size="19.42" textLength="10.80" lengthAdjust="spacingAndGlyphs" fill="#e4e4e4">2</text>
<rect x="174.56" y="652" width="2" height="7" fill="#e8e8e8"/>
<text x="170.27" y="680.70" font-size="19.42" textLength="10.80" lengthAdjust="spacingAndGlyphs" fill="#e4e4e4">4</text>
<rect x="231.24" y="652" width="2" height="7" fill="#e8e8e8"/>
<text x="226.75" y="680.70" font-size="19.42" textLength="10.80" lengthAdjust="spacingAndGlyphs" fill="#e4e4e4">6</text>
<rect x="287.92" y="652" width="2" height="7" fill="#e8e8e8"/>
<text x="283.48" y="680.70" font-size="19.42" textLength="10.80" lengthAdjust="spacingAndGlyphs" fill="#e4e4e4">8</text>
<rect x="344.60" y="652" width="2" height="7" fill="#e8e8e8"/>
<text x="334.43" y="680.70" font-size="19.42" textLength="21.60" lengthAdjust="spacingAndGlyphs" fill="#e4e4e4">10</text>
<rect x="401.28" y="652" width="2" height="7" fill="#e8e8e8"/>
<text x="391.26" y="680.70" font-size="19.42" textLength="21.60" lengthAdjust="spacingAndGlyphs" fill="#e4e4e4">12</text>
<rect x="457.96" y="652" width="2" height="7" fill="#e8e8e8"/>
<text x="447.74" y="680.70" font-size="19.42" textLength="21.60" lengthAdjust="spacingAndGlyphs" fill="#e4e4e4">14</text>
<text x="896.47" y="206.90" font-size="19.71" textLength="115.56" lengthAdjust="spacingAndGlyphs" fill="#e4e4e4">RGB Balance</text>
<rect x="585" y="214" width="782" height="437.29999999999995" fill="#222"/>
<rect x="576" y="650.00" width="8" height="2" fill="#e8e8e8"/>
<text x="553.69" y="660.80" font-size="20.29" textLength="22.57" lengthAdjust="spacingAndGlyphs" fill="#e4e4e4">80</text>
<rect x="585" y="595.80" width="782" height="2" fill="#8e8e8e"/>
<rect x="576" y="595.80" width="8" height="2" fill="#e8e8e8"/>
<text x="553.79" y="606.20" font-size="20.29" textLength="22.57" lengthAdjust="spacingAndGlyphs" fill="#e4e4e4">85</text>
<rect x="585" y="541.90" width="782" height="2" fill="#8e8e8e"/>
<rect x="576" y="541.90" width="8" height="2" fill="#e8e8e8"/>
<text x="553.69" y="551.60" font-size="20.29" textLength="22.57" lengthAdjust="spacingAndGlyphs" fill="#e4e4e4">90</text>
<rect x="585" y="487.80" width="782" height="2" fill="#8e8e8e"/>
<rect x="576" y="487.80" width="8" height="2" fill="#e8e8e8"/>
<text x="553.79" y="497.00" font-size="20.29" textLength="22.57" lengthAdjust="spacingAndGlyphs" fill="#e4e4e4">95</text>
<rect x="585" y="433.90" width="782" height="2" fill="#8e8e8e"/>
<rect x="576" y="433.90" width="8" height="2" fill="#e8e8e8"/>
<text x="542.43" y="442.40" font-size="20.29" textLength="33.85" lengthAdjust="spacingAndGlyphs" fill="#e4e4e4">100</text>
<rect x="585" y="377.90" width="782" height="2" fill="#8e8e8e"/>
<rect x="576" y="377.90" width="8" height="2" fill="#e8e8e8"/>
<text x="542.53" y="387.80" font-size="20.29" textLength="33.85" lengthAdjust="spacingAndGlyphs" fill="#e4e4e4">105</text>
<rect x="585" y="323.60" width="782" height="2" fill="#8e8e8e"/>
<rect x="576" y="323.60" width="8" height="2" fill="#e8e8e8"/>
<text x="543.85" y="333.20" font-size="20.29" textLength="32.35" lengthAdjust="spacingAndGlyphs" fill="#e4e4e4">110</text>
<rect x="585" y="269.00" width="782" height="2" fill="#8e8e8e"/>
<rect x="576" y="269.00" width="8" height="2" fill="#e8e8e8"/>
<text x="543.95" y="278.60" font-size="20.29" textLength="32.35" lengthAdjust="spacingAndGlyphs" fill="#e4e4e4">115</text>
<rect x="576" y="215.00" width="8" height="2" fill="#e8e8e8"/>
<text x="542.43" y="224.00" font-size="20.29" textLength="33.85" lengthAdjust="spacingAndGlyphs" fill="#e4e4e4">120</text>
<polyline points="585.0,432.0 663.1,476.2 741.3,462.8 819.5,451.3 897.6,449.8 975.8,445.5 1053.9,441.7 1132.1,444.8 1210.2,444.4 1288.3,444.8 1366.5,436.3" fill="none" stroke="#f00" stroke-width="4" stroke-linejoin="round" stroke-linecap="butt"/>
<polyline points="585.0,432.0 663.1,476.2 741.3,459.4 819.5,447.8 897.6,442.9 975.8,437.1 1053.9,434.4 1132.1,435.2 1210.2,435.2 1288.3,432.5 1366.5,428.7" fill="none" stroke="#0a8a0a" stroke-width="3.6" stroke-linejoin="round" stroke-linecap="butt"/>
<polyline points="585.0,431.3 663.1,474.7 741.3,456.3 819.5,444.8 897.6,445.9 975.8,439.0 1053.9,436.3 1132.1,436.3 1210.2,441.0 1288.3,442.5 1366.5,442.9" fill="none" stroke="#0000f0" stroke-width="4" stroke-linejoin="round" stroke-linecap="butt"/>
<rect x="584" y="213" width="784" height="4" fill="#9a9a9a"/>
<rect x="584" y="650" width="784" height="3" fill="#9a9a9a"/>
<rect x="584" y="213" width="2" height="440" fill="#9a9a9a"/>
<rect x="1366" y="213" width="2" height="440" fill="#9a9a9a"/>
<rect x="584.20" y="653" width="1.6" height="6" fill="#e8e8e8"/>
<text x="579.60" y="681.20" font-size="19.28" textLength="10.72" lengthAdjust="spacingAndGlyphs" fill="#e4e4e4">0</text>
<rect x="662.35" y="653" width="1.6" height="6" fill="#e8e8e8"/>
<text x="652.07" y="681.20" font-size="19.28" textLength="21.44" lengthAdjust="spacingAndGlyphs" fill="#e4e4e4">10</text>
<rect x="740.50" y="653" width="1.6" height="6" fill="#e8e8e8"/>
<text x="730.46" y="681.20" font-size="19.28" textLength="21.44" lengthAdjust="spacingAndGlyphs" fill="#e4e4e4">20</text>
<rect x="818.65" y="653" width="1.6" height="6" fill="#e8e8e8"/>
<text x="808.70" y="681.20" font-size="19.28" textLength="21.44" lengthAdjust="spacingAndGlyphs" fill="#e4e4e4">30</text>
<rect x="896.80" y="653" width="1.6" height="6" fill="#e8e8e8"/>
<text x="887.05" y="681.20" font-size="19.28" textLength="21.44" lengthAdjust="spacingAndGlyphs" fill="#e4e4e4">40</text>
<rect x="974.95" y="653" width="1.6" height="6" fill="#e8e8e8"/>
<text x="965.00" y="681.20" font-size="19.28" textLength="21.44" lengthAdjust="spacingAndGlyphs" fill="#e4e4e4">50</text>
<rect x="1053.10" y="653" width="1.6" height="6" fill="#e8e8e8"/>
<text x="1043.06" y="681.20" font-size="19.28" textLength="21.44" lengthAdjust="spacingAndGlyphs" fill="#e4e4e4">60</text>
<rect x="1131.25" y="653" width="1.6" height="6" fill="#e8e8e8"/>
<text x="1121.21" y="681.20" font-size="19.28" textLength="21.44" lengthAdjust="spacingAndGlyphs" fill="#e4e4e4">70</text>
<rect x="1209.40" y="653" width="1.6" height="6" fill="#e8e8e8"/>
<text x="1199.41" y="681.20" font-size="19.28" textLength="21.44" lengthAdjust="spacingAndGlyphs" fill="#e4e4e4">80</text>
<rect x="1287.55" y="653" width="1.6" height="6" fill="#e8e8e8"/>
<text x="1277.56" y="681.20" font-size="19.28" textLength="21.44" lengthAdjust="spacingAndGlyphs" fill="#e4e4e4">90</text>
<rect x="1365.70" y="653" width="1.6" height="6" fill="#e8e8e8"/>
<text x="1350.07" y="681.20" font-size="19.28" textLength="32.16" lengthAdjust="spacingAndGlyphs" fill="#e4e4e4">100</text>
<text x="1757.28" y="207.60" font-size="20.29" textLength="152.02" lengthAdjust="spacingAndGlyphs" fill="#e4e4e4">Gamma Log/Log</text>
<rect x="1457" y="214" width="788" height="437" fill="#222"/>
<rect x="1457" y="645.10" width="788" height="2" fill="#8e8e8e"/>
<rect x="1448" y="645.10" width="8" height="2" fill="#e8e8e8"/>
<text x="1437.05" y="652.90" font-size="20.29" textLength="11.28" lengthAdjust="spacingAndGlyphs" fill="#e4e4e4">1</text>
<rect x="1457" y="590.67" width="788" height="2" fill="#8e8e8e"/>
<rect x="1448" y="590.67" width="8" height="2" fill="#e8e8e8"/>
<text x="1420.21" y="598.47" font-size="20.29" textLength="28.21" lengthAdjust="spacingAndGlyphs" fill="#e4e4e4">1,2</text>
<rect x="1457" y="536.24" width="788" height="2" fill="#8e8e8e"/>
<rect x="1448" y="536.24" width="8" height="2" fill="#e8e8e8"/>
<text x="1419.81" y="544.04" font-size="20.29" textLength="28.21" lengthAdjust="spacingAndGlyphs" fill="#e4e4e4">1,4</text>
<rect x="1457" y="481.81" width="788" height="2" fill="#8e8e8e"/>
<rect x="1448" y="481.81" width="8" height="2" fill="#e8e8e8"/>
<text x="1420.01" y="489.61" font-size="20.29" textLength="28.21" lengthAdjust="spacingAndGlyphs" fill="#e4e4e4">1,6</text>
<rect x="1457" y="427.38" width="788" height="2" fill="#8e8e8e"/>
<rect x="1448" y="427.38" width="8" height="2" fill="#e8e8e8"/>
<text x="1420.01" y="435.18" font-size="20.29" textLength="28.21" lengthAdjust="spacingAndGlyphs" fill="#e4e4e4">1,8</text>
<rect x="1457" y="372.95" width="788" height="2" fill="#8e8e8e"/>
<rect x="1448" y="372.95" width="8" height="2" fill="#e8e8e8"/>
<text x="1437.15" y="380.75" font-size="20.29" textLength="11.28" lengthAdjust="spacingAndGlyphs" fill="#e4e4e4">2</text>
<rect x="1457" y="318.52" width="788" height="2" fill="#8e8e8e"/>
<rect x="1448" y="318.52" width="8" height="2" fill="#e8e8e8"/>
<text x="1420.21" y="326.32" font-size="20.29" textLength="28.21" lengthAdjust="spacingAndGlyphs" fill="#e4e4e4">2,2</text>
<rect x="1457" y="264.09" width="788" height="2" fill="#8e8e8e"/>
<rect x="1448" y="264.09" width="8" height="2" fill="#e8e8e8"/>
<text x="1419.81" y="271.89" font-size="20.29" textLength="28.21" lengthAdjust="spacingAndGlyphs" fill="#e4e4e4">2,4</text>
<polyline points="1457.0,567.0 1535.8,300.1 1614.6,302.0 1693.4,304.0 1772.2,296.2 1851.0,295.0 1929.8,296.2 2008.6,285.6 2087.4,278.5 2166.2,265.9 2245.0,296.5" fill="none" stroke="#8c8c8c" stroke-width="4" stroke-linejoin="round" stroke-linecap="butt"/>
<polyline points="1455.5,566.6 1458.6,527.8 1463.4,485.8 1473.7,456.7 1492.0,415.8 1511.4,388.8 1536.2,369.4 1566.4,353.3 1600.9,341.4 1622.4,335.0 1650.0,329.6 1693.3,323.8 1772.0,314.7 1850.8,308.5 1929.6,304.3 2008.3,301.3 2087.1,298.6 2165.9,296.6 2244.7,295.0" fill="none" stroke="#f2f200" stroke-width="3.6" stroke-linejoin="round" stroke-linecap="butt"/>
<rect x="1457" y="214" width="788" height="437" fill="none" stroke="#9a9a9a" stroke-width="2"/>
<rect x="1456.00" y="652" width="2" height="7" fill="#e8e8e8"/>
<text x="1451.60" y="680.50" font-size="19.28" textLength="10.72" lengthAdjust="spacingAndGlyphs" fill="#e4e4e4">0</text>
<rect x="1534.80" y="652" width="2" height="7" fill="#e8e8e8"/>
<text x="1524.72" y="680.50" font-size="19.28" textLength="21.44" lengthAdjust="spacingAndGlyphs" fill="#e4e4e4">10</text>
<rect x="1613.60" y="652" width="2" height="7" fill="#e8e8e8"/>
<text x="1603.76" y="680.50" font-size="19.28" textLength="21.44" lengthAdjust="spacingAndGlyphs" fill="#e4e4e4">20</text>
<rect x="1692.40" y="652" width="2" height="7" fill="#e8e8e8"/>
<text x="1682.65" y="680.50" font-size="19.28" textLength="21.44" lengthAdjust="spacingAndGlyphs" fill="#e4e4e4">30</text>
<rect x="1771.20" y="652" width="2" height="7" fill="#e8e8e8"/>
<text x="1761.65" y="680.50" font-size="19.28" textLength="21.44" lengthAdjust="spacingAndGlyphs" fill="#e4e4e4">40</text>
<rect x="1850.00" y="652" width="2" height="7" fill="#e8e8e8"/>
<text x="1840.25" y="680.50" font-size="19.28" textLength="21.44" lengthAdjust="spacingAndGlyphs" fill="#e4e4e4">50</text>
<rect x="1928.80" y="652" width="2" height="7" fill="#e8e8e8"/>
<text x="1918.96" y="680.50" font-size="19.28" textLength="21.44" lengthAdjust="spacingAndGlyphs" fill="#e4e4e4">60</text>
<rect x="2007.60" y="652" width="2" height="7" fill="#e8e8e8"/>
<text x="1997.76" y="680.50" font-size="19.28" textLength="21.44" lengthAdjust="spacingAndGlyphs" fill="#e4e4e4">70</text>
<rect x="2086.40" y="652" width="2" height="7" fill="#e8e8e8"/>
<text x="2076.61" y="680.50" font-size="19.28" textLength="21.44" lengthAdjust="spacingAndGlyphs" fill="#e4e4e4">80</text>
<rect x="2165.20" y="652" width="2" height="7" fill="#e8e8e8"/>
<text x="2155.41" y="680.50" font-size="19.28" textLength="21.44" lengthAdjust="spacingAndGlyphs" fill="#e4e4e4">90</text>
<rect x="2244.00" y="652" width="2" height="7" fill="#e8e8e8"/>
<text x="2228.57" y="680.50" font-size="19.28" textLength="32.16" lengthAdjust="spacingAndGlyphs" fill="#e4e4e4">100</text>
<text x="119.80" y="738.30" font-size="43.48" textLength="297.89" lengthAdjust="spacingAndGlyphs" fill="#f0f0f0">Avg dE2000: 1,7</text>
<text x="683.90" y="738.10" font-size="43.48" textLength="262.48" lengthAdjust="spacingAndGlyphs" fill="#f0f0f0">Avg CCT: 6574</text>
<text x="1185.72" y="738.10" font-size="43.48" textLength="405.27" lengthAdjust="spacingAndGlyphs" fill="#f0f0f0">Contrast Ratio: 15550</text>
<text x="1788.27" y="737.90" font-size="43.48" textLength="351.75" lengthAdjust="spacingAndGlyphs" fill="#f0f0f0">Total Gamma: 2,29</text>
<rect x="1" y="765" width="2291" height="180" fill="#000"/>
<rect x="338" y="765" width="1" height="180" fill="#0c0c0c"/>
<rect x="2094.5" y="765" width="1" height="180" fill="#0c0c0c"/>
<g transform="translate(357,827.7) rotate(-90)"><text x="0.00" y="0.00" font-size="17.83" textLength="48.10" lengthAdjust="spacingAndGlyphs" fill="#f4f4f4">Actual</text></g>
<g transform="translate(357,906) rotate(-90)"><text x="-0.35" y="0.00" font-size="17.83" textLength="48.01" lengthAdjust="spacingAndGlyphs" fill="#f4f4f4">Target</text></g>
<rect x="367.0" y="773" width="135" height="141" fill="rgb(0,0,0)"/>
<rect x="367.0" y="773" width="135" height="70" fill="rgb(0,0,0)"/>
<rect x="368.25" y="774.25" width="132.5" height="138.5" fill="none" stroke="#f2f2f2" stroke-width="2.5"/>
<text x="429.82" y="932.90" font-size="16.52" textLength="9.37" lengthAdjust="spacingAndGlyphs" fill="#fafafa" font-weight="700">0</text>
<rect x="524.9" y="773" width="135" height="141" fill="rgb(27,27,27)"/>
<rect x="524.9" y="773" width="135" height="70" fill="rgb(18,18,18)"/>
<rect x="526.15" y="774.25" width="132.5" height="138.5" fill="none" stroke="#f2f2f2" stroke-width="2.5"/>
<text x="582.88" y="932.90" font-size="16.52" textLength="18.75" lengthAdjust="spacingAndGlyphs" fill="#fafafa" font-weight="700">10</text>
<rect x="682.8" y="773" width="135" height="141" fill="rgb(51,51,51)"/>
<rect x="682.8" y="773" width="135" height="70" fill="rgb(45,45,45)"/>
<rect x="684.05" y="774.25" width="132.5" height="138.5" fill="none" stroke="#f2f2f2" stroke-width="2.5"/>
<text x="740.99" y="932.90" font-size="16.52" textLength="18.75" lengthAdjust="spacingAndGlyphs" fill="#fafafa" font-weight="700">20</text>
<rect x="840.7" y="773" width="135" height="141" fill="rgb(77,77,77)"/>
<rect x="840.7" y="773" width="135" height="70" fill="rgb(72,72,72)"/>
<rect x="841.95" y="774.25" width="132.5" height="138.5" fill="none" stroke="#f2f2f2" stroke-width="2.5"/>
<text x="898.97" y="932.90" font-size="16.52" textLength="18.75" lengthAdjust="spacingAndGlyphs" fill="#fafafa" font-weight="700">30</text>
<rect x="998.6" y="773" width="135" height="141" fill="rgb(102,102,102)"/>
<rect x="998.6" y="773" width="135" height="70" fill="rgb(97,97,97)"/>
<rect x="999.85" y="774.25" width="132.5" height="138.5" fill="none" stroke="#f2f2f2" stroke-width="2.5"/>
<text x="1056.96" y="932.90" font-size="16.52" textLength="18.75" lengthAdjust="spacingAndGlyphs" fill="#fafafa" font-weight="700">40</text>
<rect x="1156.5" y="773" width="135" height="141" fill="rgb(128,128,128)"/>
<rect x="1156.5" y="773" width="135" height="70" fill="rgb(125,125,125)"/>
<rect x="1157.75" y="774.25" width="132.5" height="138.5" fill="none" stroke="#f2f2f2" stroke-width="2.5"/>
<text x="1214.73" y="932.90" font-size="16.52" textLength="18.75" lengthAdjust="spacingAndGlyphs" fill="#fafafa" font-weight="700">50</text>
<rect x="1314.4" y="773" width="135" height="141" fill="rgb(153,153,153)"/>
<rect x="1314.4" y="773" width="135" height="70" fill="rgb(151,151,151)"/>
<rect x="1315.65" y="774.25" width="132.5" height="138.5" fill="none" stroke="#f2f2f2" stroke-width="2.5"/>
<text x="1372.59" y="932.90" font-size="16.52" textLength="18.75" lengthAdjust="spacingAndGlyphs" fill="#fafafa" font-weight="700">60</text>
<rect x="1472.3" y="773" width="135" height="141" fill="rgb(179,179,179)"/>
<rect x="1472.3" y="773" width="135" height="70" fill="rgb(177,177,177)"/>
<rect x="1473.55" y="774.25" width="132.5" height="138.5" fill="none" stroke="#f2f2f2" stroke-width="2.5"/>
<text x="1530.45" y="932.90" font-size="16.52" textLength="18.75" lengthAdjust="spacingAndGlyphs" fill="#fafafa" font-weight="700">70</text>
<rect x="1630.2" y="773" width="135" height="141" fill="rgb(204,204,204)"/>
<rect x="1630.2" y="773" width="135" height="70" fill="rgb(201,201,201)"/>
<rect x="1631.45" y="774.25" width="132.5" height="138.5" fill="none" stroke="#f2f2f2" stroke-width="2.5"/>
<text x="1688.43" y="932.90" font-size="16.52" textLength="18.75" lengthAdjust="spacingAndGlyphs" fill="#fafafa" font-weight="700">80</text>
<rect x="1788.1" y="773" width="135" height="141" fill="rgb(229,229,229)"/>
<rect x="1788.1" y="773" width="135" height="70" fill="rgb(226,226,226)"/>
<rect x="1789.35" y="774.25" width="132.5" height="138.5" fill="none" stroke="#f2f2f2" stroke-width="2.5"/>
<text x="1846.29" y="932.90" font-size="16.52" textLength="18.75" lengthAdjust="spacingAndGlyphs" fill="#fafafa" font-weight="700">90</text>
<rect x="1946.0" y="773" width="135" height="141" fill="rgb(255,255,255)"/>
<rect x="1946.0" y="773" width="135" height="70" fill="rgb(253,253,253)"/>
<rect x="1947.25" y="774.25" width="132.5" height="138.5" fill="none" stroke="#f2f2f2" stroke-width="2.5"/>
<text x="1999.30" y="932.90" font-size="16.52" textLength="28.12" lengthAdjust="spacingAndGlyphs" fill="#fafafa" font-weight="700">100</text>
<text x="20.23" y="1018.00" font-size="40.00" textLength="303.77" lengthAdjust="spacingAndGlyphs" fill="#f0f0f0">Current Reading</text>
<text x="20.96" y="1075.30" font-size="32.17" textLength="141.90" lengthAdjust="spacingAndGlyphs" fill="#f0f0f0">x: 0,3135</text>
<text x="21.13" y="1130.60" font-size="32.17" textLength="141.73" lengthAdjust="spacingAndGlyphs" fill="#f0f0f0">y: 0,3323</text>
<text x="21.39" y="1187.90" font-size="32.17" textLength="151.96" lengthAdjust="spacingAndGlyphs" fill="#f0f0f0">fL: 241,41</text>
<text x="20.46" y="1243.20" font-size="32.17" textLength="219.89" lengthAdjust="spacingAndGlyphs" fill="#f0f0f0">cd/m²: 827,14</text>
<rect x="450" y="974.5" width="402" height="295" fill="#1b1b1b"/>
<rect x="459.7" y="984.2" width="383.3" height="279.39999999999986" fill="#303030"/>
<rect x="513" y="990" width="325" height="4" fill="url(#cie0)" shape-rendering="crispEdges"/>
<rect x="513" y="994" width="325" height="4" fill="url(#cie1)" shape-rendering="crispEdges"/>
<rect x="513" y="998" width="325" height="4" fill="url(#cie2)" shape-rendering="crispEdges"/>
<rect x="513" y="1002" width="325" height="4" fill="url(#cie3)" shape-rendering="crispEdges"/>
<rect x="513" y="1006" width="325" height="4" fill="url(#cie4)" shape-rendering="crispEdges"/>
<rect x="513" y="1010" width="325" height="4" fill="url(#cie5)" shape-rendering="crispEdges"/>
<rect x="513" y="1014" width="325" height="4" fill="url(#cie6)" shape-rendering="crispEdges"/>
<rect x="513" y="1018" width="325" height="4" fill="url(#cie7)" shape-rendering="crispEdges"/>
<rect x="513" y="1022" width="325" height="4" fill="url(#cie8)" shape-rendering="crispEdges"/>
<rect x="513" y="1026" width="325" height="4" fill="url(#cie9)" shape-rendering="crispEdges"/>
<rect x="513" y="1030" width="325" height="4" fill="url(#cie10)" shape-rendering="crispEdges"/>
<rect x="513" y="1034" width="325" height="4" fill="url(#cie11)" shape-rendering="crispEdges"/>
<rect x="513" y="1038" width="325" height="4" fill="url(#cie12)" shape-rendering="crispEdges"/>
<rect x="513" y="1042" width="325" height="4" fill="url(#cie13)" shape-rendering="crispEdges"/>
<rect x="513" y="1046" width="325" height="4" fill="url(#cie14)" shape-rendering="crispEdges"/>
<rect x="513" y="1050" width="325" height="4" fill="url(#cie15)" shape-rendering="crispEdges"/>
<rect x="513" y="1054" width="325" height="4" fill="url(#cie16)" shape-rendering="crispEdges"/>
<rect x="513" y="1058" width="325" height="4" fill="url(#cie17)" shape-rendering="crispEdges"/>
<rect x="513" y="1062" width="325" height="4" fill="url(#cie18)" shape-rendering="crispEdges"/>
<rect x="513" y="1066" width="325" height="4" fill="url(#cie19)" shape-rendering="crispEdges"/>
<rect x="513" y="1070" width="325" height="4" fill="url(#cie20)" shape-rendering="crispEdges"/>
<rect x="513" y="1074" width="325" height="4" fill="url(#cie21)" shape-rendering="crispEdges"/>
<rect x="513" y="1078" width="325" height="4" fill="url(#cie22)" shape-rendering="crispEdges"/>
<rect x="513" y="1082" width="325" height="4" fill="url(#cie23)" shape-rendering="crispEdges"/>
<rect x="513" y="1086" width="325" height="4" fill="url(#cie24)" shape-rendering="crispEdges"/>
<rect x="513" y="1090" width="325" height="4" fill="url(#cie25)" shape-rendering="crispEdges"/>
<rect x="513" y="1094" width="325" height="4" fill="url(#cie26)" shape-rendering="crispEdges"/>
<rect x="513" y="1098" width="325" height="4" fill="url(#cie27)" shape-rendering="crispEdges"/>
<rect x="513" y="1102" width="325" height="4" fill="url(#cie28)" shape-rendering="crispEdges"/>
<rect x="513" y="1106" width="325" height="4" fill="url(#cie29)" shape-rendering="crispEdges"/>
<rect x="513" y="1110" width="325" height="4" fill="url(#cie30)" shape-rendering="crispEdges"/>
<rect x="513" y="1114" width="325" height="4" fill="url(#cie31)" shape-rendering="crispEdges"/>
<rect x="513" y="1118" width="325" height="4" fill="url(#cie32)" shape-rendering="crispEdges"/>
<rect x="513" y="1122" width="325" height="4" fill="url(#cie33)" shape-rendering="crispEdges"/>
<rect x="513" y="1126" width="325" height="4" fill="url(#cie34)" shape-rendering="crispEdges"/>
<rect x="513" y="1130" width="325" height="4" fill="url(#cie35)" shape-rendering="crispEdges"/>
<rect x="513" y="1134" width="325" height="4" fill="url(#cie36)" shape-rendering="crispEdges"/>
<rect x="513" y="1138" width="325" height="4" fill="url(#cie37)" shape-rendering="crispEdges"/>
<rect x="513" y="1142" width="325" height="4" fill="url(#cie38)" shape-rendering="crispEdges"/>
<rect x="513" y="1146" width="325" height="4" fill="url(#cie39)" shape-rendering="crispEdges"/>
<rect x="513" y="1150" width="325" height="4" fill="url(#cie40)" shape-rendering="crispEdges"/>
<rect x="513" y="1154" width="325" height="4" fill="url(#cie41)" shape-rendering="crispEdges"/>
<rect x="513" y="1158" width="325" height="4" fill="url(#cie42)" shape-rendering="crispEdges"/>
<rect x="513" y="1162" width="325" height="4" fill="url(#cie43)" shape-rendering="crispEdges"/>
<rect x="513" y="1166" width="325" height="4" fill="url(#cie44)" shape-rendering="crispEdges"/>
<rect x="513" y="1170" width="325" height="4" fill="url(#cie45)" shape-rendering="crispEdges"/>
<rect x="513" y="1174" width="325" height="4" fill="url(#cie46)" shape-rendering="crispEdges"/>
<rect x="513" y="1178" width="325" height="4" fill="url(#cie47)" shape-rendering="crispEdges"/>
<rect x="513" y="1182" width="325" height="4" fill="url(#cie48)" shape-rendering="crispEdges"/>
<rect x="513" y="1186" width="325" height="4" fill="url(#cie49)" shape-rendering="crispEdges"/>
<rect x="513" y="1190" width="325" height="4" fill="url(#cie50)" shape-rendering="crispEdges"/>
<rect x="513" y="1194" width="325" height="4" fill="url(#cie51)" shape-rendering="crispEdges"/>
<rect x="513" y="1198" width="325" height="4" fill="url(#cie52)" shape-rendering="crispEdges"/>
<rect x="513" y="1202" width="325" height="4" fill="url(#cie53)" shape-rendering="crispEdges"/>
<rect x="513" y="1206" width="325" height="4" fill="url(#cie54)" shape-rendering="crispEdges"/>
<rect x="513" y="1210" width="325" height="4" fill="url(#cie55)" shape-rendering="crispEdges"/>
<rect x="513" y="1214" width="325" height="4" fill="url(#cie56)" shape-rendering="crispEdges"/>
<rect x="513" y="1218" width="325" height="4" fill="url(#cie57)" shape-rendering="crispEdges"/>
<rect x="513" y="1222" width="325" height="3" fill="url(#cie58)" shape-rendering="crispEdges"/>
<rect x="512" y="989" width="326.29999999999995" height="236.0999999999999" fill="none" stroke="#8c8c8c" stroke-width="2"/>
<clipPath id="plotclip"><rect x="513" y="990" width="324.29999999999995" height="234.0999999999999"/></clipPath>
<path d="M550,1227 Q693,1110 840,1025.5" fill="none" stroke="#000" stroke-width="3.3" clip-path="url(#plotclip)"/>
<rect x="664.5" y="1097" width="19" height="19" fill="#fff" stroke="#000" stroke-width="2.2"/>
<circle cx="666.9" cy="1111.4" r="5.4" fill="#222" stroke="#000" stroke-width="1.5"/>
<circle cx="651.3" cy="1113.5" r="5.4" fill="#2e2e2e" stroke="#000" stroke-width="1.5"/>
<circle cx="656.7" cy="1107" r="5.4" fill="#474747" stroke="#000" stroke-width="1.5"/>
<circle cx="662.8" cy="1106.6" r="5.4" fill="#aaa" stroke="#000" stroke-width="1.5"/>
<circle cx="666" cy="1100.5" r="5.4" fill="#bdbdbd" stroke="#000" stroke-width="1.5"/>
<circle cx="668" cy="1097.6" r="5.4" fill="#cfcfcf" stroke="#000" stroke-width="1.5"/>
<circle cx="670" cy="1093.3" r="5.4" fill="#dedede" stroke="#000" stroke-width="1.5"/>
<circle cx="677.6" cy="1089" r="5.4" fill="#fff" stroke="#000" stroke-width="1.5"/>
<rect x="503.5" y="1005.60" width="7.5" height="2" fill="#e0e0e0"/>
<text x="464.60" y="1014.50" font-size="19.42" textLength="37.80" lengthAdjust="spacingAndGlyphs" fill="#dcdcdc">0,35</text>
<rect x="503.5" y="1054.70" width="7.5" height="2" fill="#e0e0e0"/>
<text x="464.41" y="1063.60" font-size="19.42" textLength="37.80" lengthAdjust="spacingAndGlyphs" fill="#dcdcdc">0,34</text>
<rect x="503.5" y="1101.40" width="7.5" height="2" fill="#e0e0e0"/>
<text x="464.60" y="1110.30" font-size="19.42" textLength="37.80" lengthAdjust="spacingAndGlyphs" fill="#dcdcdc">0,33</text>
<rect x="503.5" y="1148.20" width="7.5" height="2" fill="#e0e0e0"/>
<text x="464.80" y="1157.10" font-size="19.42" textLength="37.80" lengthAdjust="spacingAndGlyphs" fill="#dcdcdc">0,32</text>
<rect x="503.5" y="1194.80" width="7.5" height="2" fill="#e0e0e0"/>
<text x="464.70" y="1203.70" font-size="19.42" textLength="37.80" lengthAdjust="spacingAndGlyphs" fill="#dcdcdc">0,31</text>
<rect x="523.90" y="1226" width="2" height="7" fill="#e0e0e0"/>
<text x="505.89" y="1254.10" font-size="20.00" textLength="38.15" lengthAdjust="spacingAndGlyphs" fill="#dcdcdc">0,29</text>
<rect x="588.80" y="1226" width="2" height="7" fill="#e0e0e0"/>
<text x="576.18" y="1254.10" font-size="20.00" textLength="27.25" lengthAdjust="spacingAndGlyphs" fill="#dcdcdc">0,3</text>
<rect x="653.70" y="1226" width="2" height="7" fill="#e0e0e0"/>
<text x="635.69" y="1254.10" font-size="20.00" textLength="38.15" lengthAdjust="spacingAndGlyphs" fill="#dcdcdc">0,31</text>
<rect x="718.60" y="1226" width="2" height="7" fill="#e0e0e0"/>
<text x="700.64" y="1254.10" font-size="20.00" textLength="38.15" lengthAdjust="spacingAndGlyphs" fill="#dcdcdc">0,32</text>
<rect x="783.50" y="1226" width="2" height="7" fill="#e0e0e0"/>
<text x="765.44" y="1254.10" font-size="20.00" textLength="38.15" lengthAdjust="spacingAndGlyphs" fill="#dcdcdc">0,33</text>
<rect x="862" y="957" width="1319" height="20" fill="#2f2f2f"/>
<rect x="862" y="977" width="1319" height="19" fill="url(#gHdr)"/>
<rect x="862" y="996.00" width="1319" height="35.66" fill="#434343"/>
<rect x="862" y="1031.36" width="1319" height="35.66" fill="#7f7f7f"/>
<rect x="862" y="1066.71" width="1319" height="35.66" fill="#434343"/>
<rect x="862" y="1102.07" width="1319" height="35.66" fill="#7f7f7f"/>
<rect x="862" y="1137.43" width="1319" height="35.66" fill="#434343"/>
<rect x="862" y="1172.79" width="1319" height="35.66" fill="#7f7f7f"/>
<rect x="862" y="1208.14" width="1319" height="35.66" fill="#434343"/>
<rect x="861" y="956" width="2" height="287.5" fill="#111"/>
<rect x="861" y="956" width="1321" height="2" fill="#050505"/>
<rect x="2180" y="956" width="2" height="287.5" fill="#050505"/>
<text x="1117.12" y="985.20" font-size="20.00" textLength="10.79" lengthAdjust="spacingAndGlyphs" fill="#f4f4f4" font-weight="700">0</text>
<text x="1212.24" y="985.20" font-size="20.00" textLength="21.58" lengthAdjust="spacingAndGlyphs" fill="#f4f4f4" font-weight="700">10</text>
<text x="1313.18" y="985.20" font-size="20.00" textLength="21.58" lengthAdjust="spacingAndGlyphs" fill="#f4f4f4" font-weight="700">20</text>
<text x="1413.98" y="985.20" font-size="20.00" textLength="21.58" lengthAdjust="spacingAndGlyphs" fill="#f4f4f4" font-weight="700">30</text>
<text x="1514.78" y="985.20" font-size="20.00" textLength="21.58" lengthAdjust="spacingAndGlyphs" fill="#f4f4f4" font-weight="700">40</text>
<text x="1615.33" y="985.20" font-size="20.00" textLength="21.58" lengthAdjust="spacingAndGlyphs" fill="#f4f4f4" font-weight="700">50</text>
<text x="1715.98" y="985.20" font-size="20.00" textLength="21.58" lengthAdjust="spacingAndGlyphs" fill="#f4f4f4" font-weight="700">60</text>
<text x="1816.63" y="985.20" font-size="20.00" textLength="21.58" lengthAdjust="spacingAndGlyphs" fill="#f4f4f4" font-weight="700">70</text>
<text x="1917.43" y="985.20" font-size="20.00" textLength="21.58" lengthAdjust="spacingAndGlyphs" fill="#f4f4f4" font-weight="700">80</text>
<text x="2018.08" y="985.20" font-size="20.00" textLength="21.58" lengthAdjust="spacingAndGlyphs" fill="#f4f4f4" font-weight="700">90</text>
<text x="2113.16" y="985.20" font-size="20.00" textLength="32.37" lengthAdjust="spacingAndGlyphs" fill="#f4f4f4" font-weight="700">100</text>
<text x="880.29" y="1022.40" font-size="23.19" textLength="82.56" lengthAdjust="spacingAndGlyphs" fill="#f2f2f2" font-weight="700">x: CIE31</text>
<text x="1077.44" y="1022.40" font-size="23.19" textLength="53.97" lengthAdjust="spacingAndGlyphs" fill="#f0f0f0">0,324</text>
<text x="1178.14" y="1022.40" font-size="23.19" textLength="53.97" lengthAdjust="spacingAndGlyphs" fill="#f0f0f0">0,312</text>
<text x="1278.84" y="1022.40" font-size="23.19" textLength="53.97" lengthAdjust="spacingAndGlyphs" fill="#f0f0f0">0,309</text>
<text x="1379.54" y="1022.40" font-size="23.19" textLength="53.97" lengthAdjust="spacingAndGlyphs" fill="#f0f0f0">0,310</text>
<text x="1480.24" y="1022.40" font-size="23.19" textLength="53.97" lengthAdjust="spacingAndGlyphs" fill="#f0f0f0">0,312</text>
<text x="1580.94" y="1022.40" font-size="23.19" textLength="52.37" lengthAdjust="spacingAndGlyphs" fill="#f0f0f0">0,311</text>
<text x="1681.64" y="1022.40" font-size="23.19" textLength="52.37" lengthAdjust="spacingAndGlyphs" fill="#f0f0f0">0,311</text>
<text x="1782.34" y="1022.40" font-size="23.19" textLength="52.37" lengthAdjust="spacingAndGlyphs" fill="#f0f0f0">0,311</text>
<text x="1883.04" y="1022.40" font-size="23.19" textLength="53.97" lengthAdjust="spacingAndGlyphs" fill="#f0f0f0">0,312</text>
<text x="1983.74" y="1022.40" font-size="23.19" textLength="53.97" lengthAdjust="spacingAndGlyphs" fill="#f0f0f0">0,312</text>
<text x="2084.44" y="1022.40" font-size="23.19" textLength="53.97" lengthAdjust="spacingAndGlyphs" fill="#f0f0f0">0,313</text>
<text x="880.29" y="1057.76" font-size="23.19" textLength="82.56" lengthAdjust="spacingAndGlyphs" fill="#f2f2f2" font-weight="700">y: CIE31</text>
<text x="1077.44" y="1057.76" font-size="23.19" textLength="53.97" lengthAdjust="spacingAndGlyphs" fill="#ececec">0,297</text>
<text x="1178.14" y="1057.76" font-size="23.19" textLength="53.97" lengthAdjust="spacingAndGlyphs" fill="#ececec">0,328</text>
<text x="1278.84" y="1057.76" font-size="23.19" textLength="53.97" lengthAdjust="spacingAndGlyphs" fill="#ececec">0,327</text>
<text x="1379.54" y="1057.76" font-size="23.19" textLength="53.97" lengthAdjust="spacingAndGlyphs" fill="#ececec">0,329</text>
<text x="1480.24" y="1057.76" font-size="23.19" textLength="53.97" lengthAdjust="spacingAndGlyphs" fill="#ececec">0,330</text>
<text x="1580.94" y="1057.76" font-size="23.19" textLength="53.97" lengthAdjust="spacingAndGlyphs" fill="#ececec">0,329</text>
<text x="1681.64" y="1057.76" font-size="23.19" textLength="53.97" lengthAdjust="spacingAndGlyphs" fill="#ececec">0,330</text>
<text x="1782.34" y="1057.76" font-size="23.19" textLength="53.97" lengthAdjust="spacingAndGlyphs" fill="#ececec">0,329</text>
<text x="1883.04" y="1057.76" font-size="23.19" textLength="53.97" lengthAdjust="spacingAndGlyphs" fill="#ececec">0,331</text>
<text x="1983.74" y="1057.76" font-size="23.19" textLength="53.97" lengthAdjust="spacingAndGlyphs" fill="#ececec">0,332</text>
<text x="2084.44" y="1057.76" font-size="23.19" textLength="53.97" lengthAdjust="spacingAndGlyphs" fill="#ececec">0,332</text>
<text x="880.11" y="1093.11" font-size="23.19" textLength="12.92" lengthAdjust="spacingAndGlyphs" fill="#f2f2f2" font-weight="700">Y</text>
<text x="1077.44" y="1093.11" font-size="23.19" textLength="53.97" lengthAdjust="spacingAndGlyphs" fill="#f0f0f0">0,053</text>
<text x="1178.57" y="1093.11" font-size="23.19" textLength="53.97" lengthAdjust="spacingAndGlyphs" fill="#f0f0f0">4,798</text>
<text x="1278.62" y="1093.11" font-size="23.19" textLength="65.96" lengthAdjust="spacingAndGlyphs" fill="#f0f0f0">22,061</text>
<text x="1379.54" y="1093.11" font-size="23.19" textLength="65.96" lengthAdjust="spacingAndGlyphs" fill="#f0f0f0">54,651</text>
<text x="1479.48" y="1093.11" font-size="23.19" textLength="77.95" lengthAdjust="spacingAndGlyphs" fill="#f0f0f0">103,238</text>
<text x="1580.18" y="1093.11" font-size="23.19" textLength="76.35" lengthAdjust="spacingAndGlyphs" fill="#f0f0f0">172,511</text>
<text x="1681.42" y="1093.11" font-size="23.19" textLength="77.95" lengthAdjust="spacingAndGlyphs" fill="#f0f0f0">259,144</text>
<text x="1782.34" y="1093.11" font-size="23.19" textLength="77.95" lengthAdjust="spacingAndGlyphs" fill="#f0f0f0">360,529</text>
<text x="1883.47" y="1093.11" font-size="23.19" textLength="77.95" lengthAdjust="spacingAndGlyphs" fill="#f0f0f0">491,151</text>
<text x="1983.52" y="1093.11" font-size="23.19" textLength="77.95" lengthAdjust="spacingAndGlyphs" fill="#f0f0f0">646,907</text>
<text x="2084.33" y="1093.11" font-size="23.19" textLength="77.95" lengthAdjust="spacingAndGlyphs" fill="#f0f0f0">827,137</text>
<text x="880.28" y="1128.47" font-size="23.19" textLength="86.14" lengthAdjust="spacingAndGlyphs" fill="#f2f2f2" font-weight="700">Target Y</text>
<text x="1077.44" y="1128.47" font-size="23.19" textLength="53.97" lengthAdjust="spacingAndGlyphs" fill="#ececec">0,000</text>
<text x="1178.03" y="1128.47" font-size="23.19" textLength="53.97" lengthAdjust="spacingAndGlyphs" fill="#ececec">8,544</text>
<text x="1278.62" y="1128.47" font-size="23.19" textLength="65.96" lengthAdjust="spacingAndGlyphs" fill="#ececec">27,382</text>
<text x="1379.54" y="1128.47" font-size="23.19" textLength="65.96" lengthAdjust="spacingAndGlyphs" fill="#ececec">59,779</text>
<text x="1479.48" y="1128.47" font-size="23.19" textLength="77.95" lengthAdjust="spacingAndGlyphs" fill="#ececec">109,900</text>
<text x="1580.18" y="1128.47" font-size="23.19" textLength="77.95" lengthAdjust="spacingAndGlyphs" fill="#ececec">178,546</text>
<text x="1681.42" y="1128.47" font-size="23.19" textLength="77.95" lengthAdjust="spacingAndGlyphs" fill="#ececec">263,482</text>
<text x="1782.34" y="1128.47" font-size="23.19" textLength="77.95" lengthAdjust="spacingAndGlyphs" fill="#ececec">368,242</text>
<text x="1883.47" y="1128.47" font-size="23.19" textLength="77.95" lengthAdjust="spacingAndGlyphs" fill="#ececec">499,448</text>
<text x="1983.52" y="1128.47" font-size="23.19" textLength="77.95" lengthAdjust="spacingAndGlyphs" fill="#ececec">654,512</text>
<text x="2084.33" y="1128.47" font-size="23.19" textLength="77.95" lengthAdjust="spacingAndGlyphs" fill="#ececec">827,137</text>
<text x="879.60" y="1163.83" font-size="23.19" textLength="176.94" lengthAdjust="spacingAndGlyphs" fill="#f2f2f2" font-weight="700">Gamma Log/Log</text>
<text x="1076.68" y="1163.83" font-size="23.19" textLength="53.97" lengthAdjust="spacingAndGlyphs" fill="#f0f0f0">1,278</text>
<text x="1177.92" y="1163.83" font-size="23.19" textLength="53.97" lengthAdjust="spacingAndGlyphs" fill="#f0f0f0">2,256</text>
<text x="1278.62" y="1163.83" font-size="23.19" textLength="53.97" lengthAdjust="spacingAndGlyphs" fill="#f0f0f0">2,252</text>
<text x="1379.32" y="1163.83" font-size="23.19" textLength="53.97" lengthAdjust="spacingAndGlyphs" fill="#f0f0f0">2,244</text>
<text x="1480.02" y="1163.83" font-size="23.19" textLength="53.97" lengthAdjust="spacingAndGlyphs" fill="#f0f0f0">2,271</text>
<text x="1580.72" y="1163.83" font-size="23.19" textLength="53.97" lengthAdjust="spacingAndGlyphs" fill="#f0f0f0">2,274</text>
<text x="1681.42" y="1163.83" font-size="23.19" textLength="53.97" lengthAdjust="spacingAndGlyphs" fill="#f0f0f0">2,272</text>
<text x="1782.12" y="1163.83" font-size="23.19" textLength="53.97" lengthAdjust="spacingAndGlyphs" fill="#f0f0f0">2,310</text>
<text x="1882.82" y="1163.83" font-size="23.19" textLength="53.97" lengthAdjust="spacingAndGlyphs" fill="#f0f0f0">2,336</text>
<text x="1983.52" y="1163.83" font-size="23.19" textLength="53.97" lengthAdjust="spacingAndGlyphs" fill="#f0f0f0">2,382</text>
<text x="2084.22" y="1163.83" font-size="23.19" textLength="53.97" lengthAdjust="spacingAndGlyphs" fill="#f0f0f0">2,275</text>
<text x="879.72" y="1199.19" font-size="23.19" textLength="40.08" lengthAdjust="spacingAndGlyphs" fill="#f2f2f2" font-weight="700">CCT</text>
<text x="1077.44" y="1199.19" font-size="23.19" textLength="89.95" lengthAdjust="spacingAndGlyphs" fill="#ececec">5997,000</text>
<text x="1177.92" y="1199.19" font-size="23.19" textLength="89.95" lengthAdjust="spacingAndGlyphs" fill="#ececec">6573,000</text>
<text x="1278.62" y="1199.19" font-size="23.19" textLength="89.95" lengthAdjust="spacingAndGlyphs" fill="#ececec">6708,000</text>
<text x="1379.32" y="1199.19" font-size="23.19" textLength="89.95" lengthAdjust="spacingAndGlyphs" fill="#ececec">6651,000</text>
<text x="1480.02" y="1199.19" font-size="23.19" textLength="89.95" lengthAdjust="spacingAndGlyphs" fill="#ececec">6556,000</text>
<text x="1580.72" y="1199.19" font-size="23.19" textLength="89.95" lengthAdjust="spacingAndGlyphs" fill="#ececec">6603,000</text>
<text x="1681.42" y="1199.19" font-size="23.19" textLength="89.95" lengthAdjust="spacingAndGlyphs" fill="#ececec">6568,000</text>
<text x="1782.12" y="1199.19" font-size="23.19" textLength="89.95" lengthAdjust="spacingAndGlyphs" fill="#ececec">6603,000</text>
<text x="1882.82" y="1199.19" font-size="23.19" textLength="89.95" lengthAdjust="spacingAndGlyphs" fill="#ececec">6529,000</text>
<text x="1983.52" y="1199.19" font-size="23.19" textLength="89.95" lengthAdjust="spacingAndGlyphs" fill="#ececec">6512,000</text>
<text x="2084.22" y="1199.19" font-size="23.19" textLength="89.95" lengthAdjust="spacingAndGlyphs" fill="#ececec">6440,000</text>
<text x="879.61" y="1234.54" font-size="23.19" textLength="86.76" lengthAdjust="spacingAndGlyphs" fill="#f2f2f2" font-weight="700">ΔE 2000</text>
<text x="1077.44" y="1234.54" font-size="23.19" textLength="53.97" lengthAdjust="spacingAndGlyphs" fill="#f0f0f0">0,067</text>
<text x="1177.92" y="1234.54" font-size="23.19" textLength="53.97" lengthAdjust="spacingAndGlyphs" fill="#f0f0f0">2,459</text>
<text x="1278.08" y="1234.54" font-size="23.19" textLength="53.97" lengthAdjust="spacingAndGlyphs" fill="#f0f0f0">1,883</text>
<text x="1378.78" y="1234.54" font-size="23.19" textLength="53.97" lengthAdjust="spacingAndGlyphs" fill="#f0f0f0">1,381</text>
<text x="1479.48" y="1234.54" font-size="23.19" textLength="53.97" lengthAdjust="spacingAndGlyphs" fill="#f0f0f0">1,513</text>
<text x="1580.18" y="1234.54" font-size="23.19" textLength="53.97" lengthAdjust="spacingAndGlyphs" fill="#f0f0f0">1,303</text>
<text x="1680.88" y="1234.54" font-size="23.19" textLength="53.97" lengthAdjust="spacingAndGlyphs" fill="#f0f0f0">1,099</text>
<text x="1781.58" y="1234.54" font-size="23.19" textLength="53.97" lengthAdjust="spacingAndGlyphs" fill="#f0f0f0">1,121</text>
<text x="1882.28" y="1234.54" font-size="23.19" textLength="53.97" lengthAdjust="spacingAndGlyphs" fill="#f0f0f0">1,643</text>
<text x="1983.52" y="1234.54" font-size="23.19" textLength="53.97" lengthAdjust="spacingAndGlyphs" fill="#f0f0f0">2,169</text>
<text x="2084.22" y="1234.54" font-size="23.19" textLength="53.97" lengthAdjust="spacingAndGlyphs" fill="#f0f0f0">2,274</text>
<rect x="2283" y="945" width="9" height="384" fill="url(#gShadeR)"/>
<rect x="1" y="1329" width="2291" height="61" fill="url(#gBar)"/>
<rect x="2" y="1329" width="150" height="61" rx="4" fill="url(#gBBtn)"/>
<rect x="7" y="1334" width="140" height="36" rx="3.5" fill="rgb(0,0,0)" stroke="rgba(0,0,0,0.25)" stroke-width="0.8"/>
<text x="74.10" y="1385.00" font-size="11.01" textLength="5.82" lengthAdjust="spacingAndGlyphs" fill="#262626" font-weight="700">0</text>
<rect x="154" y="1329" width="150" height="61" rx="4" fill="url(#gBBtn)"/>
<rect x="159" y="1334" width="140" height="36" rx="3.5" fill="rgb(26,26,26)" stroke="rgba(0,0,0,0.25)" stroke-width="0.8"/>
<text x="223.09" y="1385.00" font-size="11.01" textLength="11.64" lengthAdjust="spacingAndGlyphs" fill="#262626" font-weight="700">10</text>
<rect x="306" y="1329" width="150" height="61" rx="4" fill="url(#gBBtn)"/>
<rect x="311" y="1334" width="140" height="36" rx="3.5" fill="rgb(51,51,51)" stroke="rgba(0,0,0,0.25)" stroke-width="0.8"/>
<text x="375.22" y="1385.00" font-size="11.01" textLength="11.64" lengthAdjust="spacingAndGlyphs" fill="#262626" font-weight="700">20</text>
<rect x="458" y="1329" width="150" height="61" rx="4" fill="url(#gBBtn)"/>
<rect x="463" y="1334" width="140" height="36" rx="3.5" fill="rgb(77,77,77)" stroke="rgba(0,0,0,0.25)" stroke-width="0.8"/>
<text x="527.27" y="1385.00" font-size="11.01" textLength="11.64" lengthAdjust="spacingAndGlyphs" fill="#262626" font-weight="700">30</text>
<rect x="610" y="1329" width="150" height="61" rx="4" fill="url(#gBBtn)"/>
<rect x="615" y="1334" width="140" height="36" rx="3.5" fill="rgb(102,102,102)" stroke="rgba(0,0,0,0.25)" stroke-width="0.8"/>
<text x="679.32" y="1385.00" font-size="11.01" textLength="11.64" lengthAdjust="spacingAndGlyphs" fill="#262626" font-weight="700">40</text>
<rect x="762" y="1329" width="150" height="61" rx="4" fill="url(#gBBtn)"/>
<rect x="767" y="1334" width="140" height="36" rx="3.5" fill="rgb(128,128,128)" stroke="rgba(0,0,0,0.25)" stroke-width="0.8"/>
<text x="831.24" y="1385.00" font-size="11.01" textLength="11.64" lengthAdjust="spacingAndGlyphs" fill="#262626" font-weight="700">50</text>
<rect x="914" y="1329" width="150" height="61" rx="4" fill="url(#gBBtn)"/>
<rect x="919" y="1334" width="140" height="36" rx="3.5" fill="rgb(153,153,153)" stroke="rgba(0,0,0,0.25)" stroke-width="0.8"/>
<text x="983.22" y="1385.00" font-size="11.01" textLength="11.64" lengthAdjust="spacingAndGlyphs" fill="#262626" font-weight="700">60</text>
<rect x="1066" y="1329" width="150" height="61" rx="4" fill="url(#gBBtn)"/>
<rect x="1071" y="1334" width="140" height="36" rx="3.5" fill="rgb(179,179,179)" stroke="rgba(0,0,0,0.25)" stroke-width="0.8"/>
<text x="1135.19" y="1385.00" font-size="11.01" textLength="11.64" lengthAdjust="spacingAndGlyphs" fill="#262626" font-weight="700">70</text>
<rect x="1218" y="1329" width="150" height="61" rx="4" fill="url(#gBBtn)"/>
<rect x="1223" y="1334" width="140" height="36" rx="3.5" fill="rgb(204,204,204)" stroke="rgba(0,0,0,0.25)" stroke-width="0.8"/>
<text x="1287.24" y="1385.00" font-size="11.01" textLength="11.64" lengthAdjust="spacingAndGlyphs" fill="#262626" font-weight="700">80</text>
<rect x="1370" y="1329" width="150" height="61" rx="4" fill="url(#gBBtn)"/>
<rect x="1375" y="1334" width="140" height="36" rx="3.5" fill="rgb(230,230,230)" stroke="rgba(0,0,0,0.25)" stroke-width="0.8"/>
<text x="1439.22" y="1385.00" font-size="11.01" textLength="11.64" lengthAdjust="spacingAndGlyphs" fill="#262626" font-weight="700">90</text>
<rect x="1522" y="1329" width="150" height="61" rx="4" fill="url(#gBSel)"/>
<rect x="1527" y="1334" width="140" height="36" rx="3.5" fill="rgb(255,255,255)" stroke="rgba(0,0,0,0.25)" stroke-width="0.8"/>
<text x="1587.02" y="1385.00" font-size="12.46" textLength="19.76" lengthAdjust="spacingAndGlyphs" fill="#ffffff" font-weight="700">100</text>
<path d="M1969,1347 V1333 Q1969,1329 1973,1329 H2013 Q2017,1329 2017,1333 V1347 Z" fill="url(#gCtl)"/>
<rect x="1969" y="1346.5" width="48" height="1.2" fill="#3c3c3c"/>
<circle cx="1993" cy="1337.5" r="7" fill="url(#gCtlC)"/>
<path d="M1988.5,1339.5 L1997.5,1339.5 L1993,1335 Z" fill="#2a2a2a"/>
<path d="M1969,1348 H2017 V1386 Q2017,1390 2013,1390 H1973 Q1969,1390 1969,1386 Z" fill="url(#gCtl2)"/>
<rect x="1978.5" y="1354.5" width="28.5" height="28.5" rx="4" fill="#b8b8b8" stroke="#222" stroke-width="2.6"/>
<rect x="1986" y="1362" width="13.8" height="13.5" fill="#222"/>
<rect x="1979.8" y="1369" width="25.9" height="12.7" fill="#000" opacity="0.12"/>
<rect x="1986" y="1369" width="13.8" height="6.5" fill="#000"/>
<path d="M2018,1359 V1332 Q2018,1329 2021,1329 H2244 V1359 Z" fill="url(#gCtl)"/>
<rect x="2064.1" y="1329" width="1" height="30" fill="#555"/>
<rect x="2109.5" y="1329" width="1" height="30" fill="#555"/>
<rect x="2154.5" y="1329" width="1" height="30" fill="#555"/>
<rect x="2199.5" y="1329" width="1" height="30" fill="#555"/>
<circle cx="2041" cy="1343.8" r="9.6" fill="url(#gCtlC)"/>
<circle cx="2087.5" cy="1343.8" r="9.6" fill="url(#gCtlC)"/>
<circle cx="2132" cy="1343.8" r="9.6" fill="url(#gCtlC)"/>
<circle cx="2177" cy="1343.8" r="9.6" fill="url(#gCtlC)"/>
<circle cx="2222" cy="1343.8" r="9.6" fill="url(#gCtlC)"/>
<rect x="2037" y="1340" width="8" height="7.6" fill="#2c2c2c"/>
<path d="M2084,1339.2 L2092.3,1344.4 L2084,1349.6 Z" fill="#2c2c2c"/>
<path d="M2129.6,1339.6 H2127.6 V1348.6 H2129.6 M2134.6,1339.6 H2136.6 V1348.6 H2134.6" fill="none" stroke="#2c2c2c" stroke-width="2"/><rect x="2130.4" y="1343.2" width="1.5" height="1.5" fill="#2c2c2c"/><rect x="2132.6" y="1343.2" width="1.5" height="1.5" fill="#2c2c2c"/>
<path d="M2177,1343.8 C2174.5,1340.5 2171.5,1340.5 2171.5,1343.8 C2171.5,1347 2174.5,1347 2177,1343.8 C2179.5,1340.5 2182.5,1340.5 2182.5,1343.8 C2182.5,1347 2179.5,1347 2177,1343.8 Z" fill="none" stroke="#2c2c2c" stroke-width="1.6"/>
<path d="M2217.9,1342.8 A4.5,4.5 0 0 1 2225.2,1340.9 M2226.1,1344.8 A4.5,4.5 0 0 1 2218.8,1346.7" fill="none" stroke="#2c2c2c" stroke-width="2.1"/><path d="M2223.2,1338.2 L2228.4,1340.6 L2224.2,1344.2 Z M2220.8,1349.4 L2215.6,1347 L2219.8,1343.4 Z" fill="#2c2c2c"/>
<rect x="2244" y="1329" width="47" height="30" fill="url(#gDark)"/>
<circle cx="2268" cy="1344" r="9.3" fill="url(#gDarkC)"/>
<path d="M2018,1390 V1363 Q2018,1360 2021,1360 H2287 Q2290,1360 2290,1363 V1390 Z" fill="url(#gCtl3)"/>
<rect x="2154" y="1360" width="1" height="30" fill="#555"/>
<circle cx="2048.7" cy="1375" r="9.7" fill="url(#gCtlC)"/>
<circle cx="2261.9" cy="1375" r="9.7" fill="url(#gCtlC)"/>
<path d="M2049,1370.5 L2045,1375 L2049,1379.5 M2053,1370.5 L2049,1375 L2053,1379.5" fill="none" stroke="#2c2c2c" stroke-width="1.5"/>
<path d="M2258.6,1370.5 L2262.6,1375 L2258.6,1379.5 M2262.6,1370.5 L2266.6,1375 L2262.6,1379.5" fill="none" stroke="#2c2c2c" stroke-width="1.5"/>
<text x="2074.20" y="1383.30" font-size="22.75" textLength="51.62" lengthAdjust="spacingAndGlyphs" fill="#2a2a2a" font-weight="700">Back</text>
<text x="2180.28" y="1383.30" font-size="22.75" textLength="54.03" lengthAdjust="spacingAndGlyphs" fill="#2a2a2a" font-weight="700">Next</text>
<rect x="0.5" y="0.5" width="2292" height="1391" fill="none" stroke="#707070" stroke-width="1"/>
<rect x="0" y="1390" width="2293" height="2" fill="#4a4a4a"/></svg></body></html>
